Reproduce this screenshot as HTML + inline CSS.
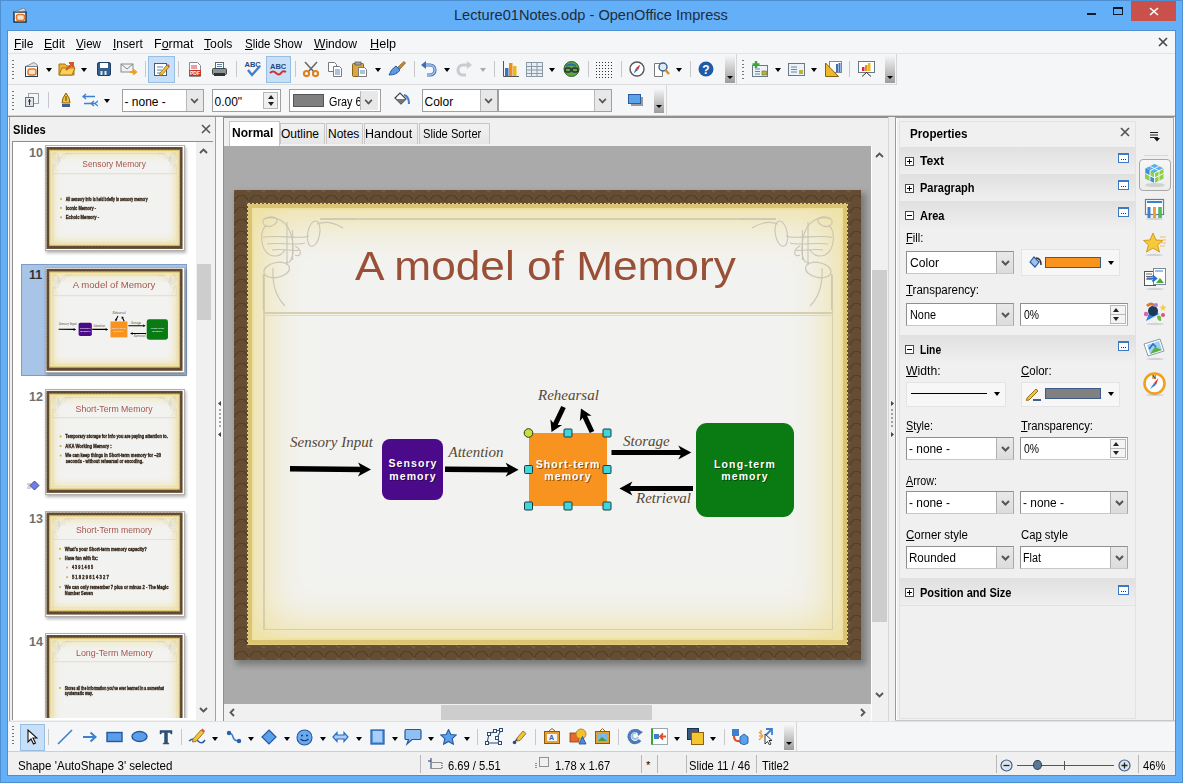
<!DOCTYPE html>
<html><head><meta charset="utf-8">
<style>
*{box-sizing:border-box;margin:0;padding:0}
html,body{width:1183px;height:783px;overflow:hidden;background:#64b0f8;font-family:"Liberation Sans",sans-serif;font-size:12px;color:#000;position:relative}
.a{position:absolute}
.t{position:absolute;white-space:nowrap;line-height:1}
.m{transform:scaleX(.93);transform-origin:0 0}
.u{text-decoration:underline;text-underline-offset:1px}
.sep{position:absolute;width:1px;background:#c8c8c8}
.dd{position:absolute;width:0;height:0;border-left:3.5px solid transparent;border-right:3.5px solid transparent;border-top:4px solid #000}
.grip{position:absolute;width:2px;background:repeating-linear-gradient(to bottom,#777 0 1px,transparent 1px 3.5px)}
.combo{position:absolute;background:#fff;border:1px solid #a0a0a0;height:23px}
.combo .btn{position:absolute;right:0;top:0;bottom:0;width:17px;background:#e8e8e8;border-left:1px solid #b8b8b8}
.chev{position:absolute;left:4px;top:6px;width:7px;height:7px;border-right:2px solid #555;border-bottom:2px solid #555;transform:rotate(45deg) scale(.8)}
.ct{position:absolute;left:1.5px;top:5px;font-size:12px;white-space:nowrap}
.hbtn{position:absolute;background:#c7dff7;border:1px solid #96bde4}
.ph{position:absolute;left:899px;width:236px;height:27px;background:linear-gradient(#e4e4e4,#eeeeee)}
.ph .tt{position:absolute;left:20px;top:8px;font-weight:bold;font-size:12.5px}
.pbox{position:absolute;left:6px;top:10px;width:9px;height:9px;border:1px solid #555;background:#fff}
.pbox:before{content:"";position:absolute;left:1px;top:3px;width:5px;height:1px;background:#000}
.pbox.plus:after{content:"";position:absolute;left:3px;top:1px;width:1px;height:5px;background:#000}
.more{position:absolute;left:219px;top:5px;width:11px;height:10px;border:1px solid #4a7ec0;background:#fff}
.more:before{content:"";position:absolute;left:0;top:0;right:0;height:2px;background:#4a7ec0}
.more:after{content:"...";position:absolute;left:1px;top:-3px;font-size:8px;color:#333}
.lbl{position:absolute;font-size:12px;white-space:nowrap;line-height:1}
</style></head><body>
<!-- title bar -->
<div class="a" style="left:0;top:0;width:1183px;height:1px;background:#4d8fd0"></div><div class="a" style="left:0;top:0;width:1px;height:783px;background:#4d8fd0"></div><div class="a" style="left:1182px;top:0;width:1px;height:783px;background:#4d8fd0"></div><div class="a" style="left:0;top:782px;width:1183px;height:1px;background:#4d8fd0"></div>
<svg class="a" style="left:13px;top:7px" width="15" height="16" viewBox="0 0 15 16"><rect x="1" y="5" width="12" height="10" fill="#fff" stroke="#1e3550" stroke-width="1.5"/><rect x="3.5" y="7.5" width="8" height="6" rx="2" fill="#f3e1c8" stroke="#e07a2c" stroke-width="1.6"/><path d="M1 5 L11 1 L13 4 Z" fill="#d8dde4" stroke="#6b7a8a" stroke-width=".8"/></svg>
<div class="t" style="left:454px;top:8px;font-size:14.6px;color:#1f2b38">Lecture01Notes.odp - OpenOffice Impress</div>
<div class="a" style="left:1087px;top:13px;width:9px;height:2px;background:#0d1b2a"></div>
<div class="a" style="left:1113px;top:7px;width:10px;height:8px;border:1px solid #0d1b2a;border-top-width:2px"></div>
<div class="a" style="left:1131px;top:1px;width:45px;height:20px;background:#c9504b"></div>
<svg class="a" style="left:1149px;top:7px" width="10" height="9"><path d="M1 1 L9 8 M9 1 L1 8" stroke="#fff" stroke-width="1.6"/></svg>

<!-- window content -->
<div class="a" style="left:7px;top:30px;width:1169px;height:746px;background:#4f8fd0"></div>
<div class="a" style="left:8px;top:31px;width:1167px;height:744px;background:#f0f0f0"></div>
<!-- menu -->
<div class="a" style="left:8px;top:31px;width:1167px;height:23px;background:#f5f6f7;border-bottom:1px solid #e2e3e4"></div>
<div class="t" style="left:14.1px;top:37.5px;font-size:12px;transform:scaleX(1.011);transform-origin:0 0"><span class="u">F</span>ile</div>
<div class="t" style="left:44.0px;top:37.5px;font-size:12px;transform:scaleX(1.013);transform-origin:0 0"><span class="u">E</span>dit</div>
<div class="t" style="left:75.7px;top:37.5px;font-size:12px;transform:scaleX(0.969);transform-origin:0 0"><span class="u">V</span>iew</div>
<div class="t" style="left:112.7px;top:37.5px;font-size:12px;transform:scaleX(0.989);transform-origin:0 0"><span class="u">I</span>nsert</div>
<div class="t" style="left:153.7px;top:37.5px;font-size:12px;transform:scaleX(1.039);transform-origin:0 0">F<span class="u">o</span>rmat</div>
<div class="t" style="left:203.9px;top:37.5px;font-size:12px;transform:scaleX(1.016);transform-origin:0 0"><span class="u">T</span>ools</div>
<div class="t" style="left:244.9px;top:37.5px;font-size:12px;transform:scaleX(0.952);transform-origin:0 0"><span class="u">S</span>lide Show</div>
<div class="t" style="left:313.7px;top:37.5px;font-size:12px;transform:scaleX(1.009);transform-origin:0 0"><span class="u">W</span>indow</div>
<div class="t" style="left:370.1px;top:37.5px;font-size:12px;transform:scaleX(1.054);transform-origin:0 0"><span class="u">H</span>elp</div>
<svg class="a" style="left:1158px;top:37px" width="10" height="10"><path d="M1 1 L9 9 M9 1 L1 9" stroke="#444" stroke-width="1.6"/></svg>

<!-- toolbar area bg -->
<div class="a" style="left:8px;top:54px;width:1167px;height:63px;background:#f5f6f7"></div>
<div class="a" style="left:8px;top:84px;width:889px;height:1px;background:#dcdcdc"></div>
<div class="a" style="left:8px;top:115px;width:1167px;height:1px;background:#d0d0d0"></div><div class="a" style="left:8px;top:116px;width:1167px;height:1px;background:#909090"></div>
<div class="a" style="left:736px;top:54px;width:1px;height:31px;background:#d6d6d6"></div>
<div class="a" style="left:896px;top:54px;width:1px;height:31px;background:#d6d6d6"></div>
<div class="a" style="left:666px;top:85px;width:1px;height:31px;background:#d6d6d6"></div>
<div class="grip" style="left:12px;top:60px;height:19px"></div>
<!-- new -->
<svg class="a" style="left:24px;top:61px" width="16" height="16"><rect x="1.5" y="5.5" width="12" height="10" fill="#fff" stroke="#243a55"/><rect x="4" y="8" width="8" height="6" rx="2" fill="#f6e3cc" stroke="#e0782a" stroke-width="1.5"/><path d="M1.5 5.5 L10 1.5 L13.5 4 L13.5 5.5Z" fill="#dde2e8" stroke="#70808f" stroke-width=".8"/></svg>
<div class="dd" style="left:46px;top:68px"></div>
<!-- open -->
<svg class="a" style="left:58px;top:61px" width="18" height="16"><path d="M1 3h6l2 2h7v9H1z" fill="#e9b430" stroke="#a97512"/><path d="M1 14 L4 7 H17 L14 14Z" fill="#f6d25a" stroke="#a97512"/><path d="M8 9 L14 3 M11 2 H15 V6" stroke="#d9541e" stroke-width="2" fill="none"/></svg>
<div class="dd" style="left:81px;top:68px"></div>
<!-- save -->
<svg class="a" style="left:96px;top:61px" width="16" height="16"><rect x="1.5" y="1.5" width="13" height="13" rx="1.5" fill="#335f8f" stroke="#1f3f66"/><rect x="4" y="2" width="8" height="5" fill="#fff"/><rect x="4.5" y="10" width="2" height="4" fill="#dfe7ef"/><rect x="8.5" y="10" width="2" height="4" fill="#dfe7ef"/></svg>
<!-- mail -->
<svg class="a" style="left:120px;top:62px" width="18" height="14"><rect x="1" y="2" width="12" height="8" fill="#f2f2f2" stroke="#8a8a8a"/><path d="M1 2 L7 7 L13 2" fill="none" stroke="#8a8a8a"/><path d="M10 10 H15 M13 7.5 L16 10 L13 12.5" stroke="#f0a020" stroke-width="2" fill="none"/></svg>
<div class="sep" style="left:145px;top:61px;height:16px"></div>
<div class="hbtn" style="left:148px;top:56px;width:27px;height:27px"></div>
<svg class="a" style="left:153px;top:61px" width="17" height="16"><rect x="1.5" y="2.5" width="12" height="12" fill="#fff" stroke="#4d5d6d"/><path d="M4 6h6M4 9h5M4 12h3" stroke="#5b86b5"/><path d="M7 12 L14 4 L16 6 L9 14 L6.5 14.5Z" fill="#f4c03a" stroke="#8d6a12" stroke-width=".8"/><path d="M14 4 L15 3 L17 5 L16 6Z" fill="#e05050"/></svg>
<div class="sep" style="left:178px;top:61px;height:16px"></div>
<!-- pdf -->
<svg class="a" style="left:187px;top:61px" width="16" height="16"><path d="M2.5 1.5h8l3 3v11h-11z" fill="#fff" stroke="#8c8c8c"/><path d="M4 5h6M4 7h6" stroke="#d04040"/><rect x="2" y="9" width="12" height="6" fill="#c8342c"/><text x="3" y="14.2" font-size="5" font-weight="bold" fill="#fff" font-family="Liberation Sans">PDF</text></svg>
<!-- print -->
<svg class="a" style="left:211px;top:61px" width="17" height="16"><rect x="4.5" y="1.5" width="8" height="6" fill="#fff" stroke="#666"/><path d="M6 3.5h5M6 5.5h5" stroke="#5b86b5"/><rect x="1.5" y="7.5" width="14" height="6" rx="1" fill="#8d9496" stroke="#3f4445"/><rect x="3" y="12" width="11" height="3" fill="#2f3335"/></svg>
<div class="sep" style="left:236px;top:61px;height:16px"></div>
<!-- spell -->
<svg class="a" style="left:244px;top:60px" width="18" height="17"><text x="0.5" y="7" font-size="7.5" font-weight="bold" fill="#224a86" font-family="Liberation Sans">ABC</text><path d="M4 10 L8 15 L16 6" stroke="#3f7fd0" stroke-width="2.4" fill="none"/></svg>
<div class="hbtn" style="left:266px;top:56px;width:25px;height:27px"></div>
<svg class="a" style="left:269px;top:61px" width="18" height="16"><text x="1" y="8" font-size="7.5" font-weight="bold" fill="#224a86" font-family="Liberation Sans">ABC</text><path d="M1 12 Q4 9 7 12 T12 12 T17 11" stroke="#d03030" stroke-width="2" fill="none"/></svg>
<div class="sep" style="left:295px;top:61px;height:16px"></div>
<!-- cut -->
<svg class="a" style="left:302px;top:61px" width="18" height="16"><path d="M3 1 L12 11 M15 1 L6 11" stroke="#6a6a6a" stroke-width="1.6"/><circle cx="4.5" cy="12.5" r="2.6" fill="none" stroke="#e0801c" stroke-width="2"/><circle cx="13.5" cy="12.5" r="2.6" fill="none" stroke="#e0801c" stroke-width="2"/></svg>
<!-- copy -->
<svg class="a" style="left:327px;top:61px" width="16" height="16"><path d="M1.5 1.5h6l2 2v7h-8z" fill="#fff" stroke="#7a7a7a"/><path d="M6.5 5.5h6l2 2v8h-8z" fill="#fff" stroke="#7a7a7a"/><path d="M8 9h5M8 11h5M8 13h5" stroke="#5b86b5"/></svg>
<!-- paste -->
<svg class="a" style="left:351px;top:61px" width="18" height="16"><rect x="1.5" y="2.5" width="11" height="13" rx="1" fill="#d9a640" stroke="#8a6518"/><rect x="4" y="1" width="6" height="3" fill="#9aa4ad" stroke="#555" stroke-width=".7"/><path d="M7.5 6.5h6l2 2v7h-8z" fill="#fff" stroke="#7a7a7a"/><path d="M9 10h5M9 12h5" stroke="#5b86b5"/></svg>
<div class="dd" style="left:375px;top:68px"></div>
<!-- brush -->
<svg class="a" style="left:388px;top:61px" width="18" height="16"><path d="M10 6 L16 0.5 L17.5 2 L12 8Z" fill="#c58b2e" stroke="#7a5518" stroke-width=".7"/><path d="M1 14 Q3 8 8 5 L12 9 Q9 14 1 14Z" fill="#5b9ae0" stroke="#2a5d9f"/></svg>
<div class="sep" style="left:414px;top:61px;height:16px"></div>
<!-- undo -->
<svg class="a" style="left:420px;top:61px" width="17" height="16"><path d="M4 4 H10 A5 5 0 0 1 10 14 H7" fill="none" stroke="#3c6eb4" stroke-width="3.2"/><path d="M4 4 H10 A5 5 0 0 1 10 14 H7" fill="none" stroke="#a9c8ee" stroke-width="1.4"/><path d="M1 4 L6 0 V8Z" fill="#3c6eb4"/></svg>
<div class="dd" style="left:444px;top:68px"></div>
<svg class="a" style="left:456px;top:61px" width="17" height="16"><path d="M13 4 H7 A5 5 0 0 0 7 14 H10" fill="none" stroke="#c9cdd2" stroke-width="3.2"/><path d="M16 4 L11 0 V8Z" fill="#c9cdd2"/></svg>
<div class="dd" style="left:480px;top:68px;border-top-color:#aaa"></div>
<div class="sep" style="left:494px;top:61px;height:16px"></div>
<!-- chart -->
<svg class="a" style="left:502px;top:61px" width="17" height="16"><path d="M1.5 0 V15.5 H17" stroke="#555" fill="none"/><rect x="3" y="7" width="3.5" height="8" fill="#3d73c0"/><rect x="7" y="2" width="3.5" height="13" fill="#f08a1a"/><rect x="11" y="5" width="3.5" height="10" fill="#e8b820"/></svg>
<!-- table -->
<svg class="a" style="left:526px;top:62px" width="17" height="15"><rect x="0.5" y="0.5" width="16" height="14" fill="#e8eef5" stroke="#8a97a5"/><path d="M0.5 4.5h16M0.5 8h16M0.5 11.5h16M5.5 .5v14M11 .5v14" stroke="#8a97a5"/></svg>
<div class="dd" style="left:549px;top:68px"></div>
<!-- globe link -->
<svg class="a" style="left:563px;top:61px" width="17" height="16"><circle cx="8.5" cy="8" r="7.5" fill="#5aa84a" stroke="#2f5e2a"/><path d="M3 5 Q8 2 13 5" stroke="#2b6aa0" stroke-width="2" fill="none"/><rect x="2" y="7" width="6" height="4" rx="2" fill="none" stroke="#333" stroke-width="1.5"/><rect x="9" y="7" width="6" height="4" rx="2" fill="none" stroke="#333" stroke-width="1.5"/></svg>
<div class="sep" style="left:588px;top:61px;height:16px"></div>
<svg class="a" style="left:595px;top:61px" width="18" height="17"><g fill="#333"><rect x="1" y="1" width="1" height="1"/><rect x="1" y="4" width="1" height="1"/><rect x="1" y="7" width="1" height="1"/><rect x="1" y="10" width="1" height="1"/><rect x="1" y="13" width="1" height="1"/><rect x="1" y="16" width="1" height="1"/><rect x="4" y="1" width="1" height="1"/><rect x="4" y="4" width="1" height="1"/><rect x="4" y="7" width="1" height="1"/><rect x="4" y="10" width="1" height="1"/><rect x="4" y="13" width="1" height="1"/><rect x="4" y="16" width="1" height="1"/><rect x="7" y="1" width="1" height="1"/><rect x="7" y="4" width="1" height="1"/><rect x="7" y="7" width="1" height="1"/><rect x="7" y="10" width="1" height="1"/><rect x="7" y="13" width="1" height="1"/><rect x="7" y="16" width="1" height="1"/><rect x="10" y="1" width="1" height="1"/><rect x="10" y="4" width="1" height="1"/><rect x="10" y="7" width="1" height="1"/><rect x="10" y="10" width="1" height="1"/><rect x="10" y="13" width="1" height="1"/><rect x="10" y="16" width="1" height="1"/><rect x="13" y="1" width="1" height="1"/><rect x="13" y="4" width="1" height="1"/><rect x="13" y="7" width="1" height="1"/><rect x="13" y="10" width="1" height="1"/><rect x="13" y="13" width="1" height="1"/><rect x="13" y="16" width="1" height="1"/><rect x="16" y="1" width="1" height="1"/><rect x="16" y="4" width="1" height="1"/><rect x="16" y="7" width="1" height="1"/><rect x="16" y="10" width="1" height="1"/><rect x="16" y="13" width="1" height="1"/><rect x="16" y="16" width="1" height="1"/></g></svg>
<div class="sep" style="left:621px;top:61px;height:16px"></div>
<!-- navigator -->
<svg class="a" style="left:629px;top:61px" width="16" height="16"><circle cx="8" cy="8" r="7" fill="#fff" stroke="#555" stroke-width="1.4"/><path d="M11.5 3.5 L7 7 L9 9Z" fill="#d02828"/><path d="M4.5 12.5 L7 7 L9 9Z" fill="#3f6fb5"/></svg>
<!-- zoom -->
<svg class="a" style="left:653px;top:61px" width="17" height="16"><path d="M1.5 2.5h6l2 2v11h-8z" fill="#fff" stroke="#7a7a7a"/><circle cx="10" cy="6" r="4" fill="#dfeaf7" stroke="#3c5f8e" stroke-width="1.4"/><path d="M12.5 9 L16 13" stroke="#c8941c" stroke-width="2.4"/></svg>
<div class="dd" style="left:676px;top:68px"></div>
<div class="sep" style="left:690px;top:61px;height:16px"></div>
<!-- help -->
<svg class="a" style="left:698px;top:61px" width="16" height="16"><circle cx="8" cy="8" r="7.5" fill="#1f5aa8"/><text x="4.2" y="12.5" font-size="12" font-weight="bold" fill="#fff" font-family="Liberation Sans">?</text></svg>
<div class="a" style="left:725px;top:56px;width:10px;height:27px;background:linear-gradient(#f4f4f4,#9c9c9c)"></div>
<div class="dd" style="left:727px;top:76px;border-left-width:3px;border-right-width:3px;border-top-width:3px"></div>
<!-- toolbar 2 of row 1 -->
<div class="grip" style="left:742px;top:60px;height:19px"></div>
<svg class="a" style="left:751px;top:61px" width="18" height="16"><rect x="1.5" y="4.5" width="15" height="11" fill="#eef2f7" stroke="#6a7785"/><path d="M4 8h5M4 10.5h5M4 13h5" stroke="#5b86b5"/><rect x="11" y="10" width="4.5" height="4" fill="#b9b53a" stroke="#6a6420" stroke-width=".6"/><path d="M5 0 V7 M1.5 3.5 H8.5" stroke="#3aa635" stroke-width="2.4"/></svg>
<div class="dd" style="left:775px;top:68px"></div>
<svg class="a" style="left:788px;top:62px" width="17" height="15"><rect x="0.5" y="1.5" width="16" height="12" fill="#eef2f7" stroke="#6a7785"/><path d="M3 5h6M3 7.5h6M3 10h6" stroke="#5b86b5"/><rect x="11" y="8" width="4" height="4" fill="#b9b53a"/></svg>
<div class="dd" style="left:811px;top:68px"></div>
<svg class="a" style="left:825px;top:61px" width="17" height="16"><rect x="4.5" y="0.5" width="12" height="11" fill="#fff" stroke="#7a8a9a"/><rect x="11" y="3" width="2" height="8" fill="#3f6fb5"/><rect x="13.5" y="2" width="2" height="9" fill="#3f6fb5"/><path d="M0.5 15.5 V2 L13.5 15.5Z" fill="#f2b62a" stroke="#8a6212"/></svg>
<div class="sep" style="left:849px;top:61px;height:16px"></div>
<svg class="a" style="left:858px;top:61px" width="17" height="16"><rect x="0.5" y="0.5" width="16" height="11" fill="#fff" stroke="#6a7785"/><rect x="4" y="6" width="2.5" height="4" fill="#d03030"/><rect x="7" y="4" width="2.5" height="6" fill="#f08a1a"/><rect x="10" y="2" width="2.5" height="8" fill="#e8b820"/><path d="M4 15.5 L8.5 11.5 L13 15.5" stroke="#333" fill="none"/></svg>
<div class="a" style="left:885px;top:56px;width:10px;height:27px;background:linear-gradient(#f4f4f4,#9c9c9c)"></div>
<div class="dd" style="left:887px;top:76px;border-left-width:3px;border-right-width:3px;border-top-width:3px"></div>

<div class="grip" style="left:12px;top:91px;height:19px"></div>
<svg class="a" style="left:24px;top:92px" width="16" height="16"><rect x="4.5" y="1.5" width="10" height="10" fill="#f4f6f8" stroke="#9aa2aa"/><rect x="1.5" y="5.5" width="8" height="9" fill="#e0e3e6" stroke="#6a737b"/><path d="M5.5 7v6M4 9h3" stroke="#333"/></svg>
<div class="sep" style="left:48px;top:92px;height:16px"></div>
<svg class="a" style="left:60px;top:92px" width="12" height="16"><path d="M6 1 Q10 6 10 11 H2 Q2 6 6 1Z" fill="#f2c23a" stroke="#8a6212"/><path d="M6 4 V9" stroke="#5a4008"/><rect x="2" y="12" width="8" height="3" fill="#3c5f8e"/></svg>
<svg class="a" style="left:81px;top:93px" width="17" height="14"><path d="M14 3.5 H3 M5 1 L2 3.5 L5 6" stroke="#3d7fd0" stroke-width="1.3" fill="none"/><path d="M3 10.5 H15 M13 8 L10 10.5 L13 13 M17 8 L14 10.5 L17 13" stroke="#3d7fd0" stroke-width="1.3" fill="none"/></svg>
<div class="dd" style="left:104px;top:99px"></div>
<div class="combo" style="left:122px;top:89px;width:82px"><div class="ct">- none -</div><div class="btn"><div class="chev"></div></div></div>
<div class="combo" style="left:212px;top:89px;width:69px"><div class="ct">0.00"</div><div class="a" style="right:2px;top:2px;width:15px;height:17px;background:#f0f0f0;border:1px solid #b5b5b5"></div><div class="a" style="right:6px;top:5px;border-left:3px solid transparent;border-right:3px solid transparent;border-bottom:4px solid #222"></div><div class="a" style="right:6px;top:12px;border-left:3px solid transparent;border-right:3px solid transparent;border-top:4px solid #222"></div></div>
<div class="combo" style="left:289px;top:89px;width:92px"><div class="a" style="left:3px;top:4px;width:31px;height:13px;background:#808080;border:1px solid #555"></div><div class="ct" style="left:38.5px;transform:scaleX(.9);transform-origin:0 0">Gray 6</div><div class="btn" style="width:18px;right:2px;top:1px;bottom:1px"><div class="chev"></div></div></div>
<svg class="a" style="left:393px;top:92px" width="17" height="16"><path d="M2 6 L7 1 L13 7 L8 12Z" fill="#fff" stroke="#444" stroke-width="1.2"/><path d="M3 7 L8 12 L13 7Z" fill="#777"/><path d="M11 3 Q16 4 16 12" stroke="#3d7fd0" stroke-width="2" fill="none"/></svg>
<div class="combo" style="left:422px;top:89px;width:76px"><div class="ct">Color</div><div class="btn"><div class="chev"></div></div></div>
<div class="combo" style="left:498px;top:89px;width:114px"><div class="btn"><div class="chev"></div></div></div>
<svg class="a" style="left:627px;top:92px" width="17" height="16"><rect x="4" y="5" width="12" height="9" fill="#9a9a9a"/><rect x="1.5" y="2.5" width="12" height="9" fill="#5aa2ea" stroke="#2a5d9f"/></svg>
<div class="a" style="left:654px;top:89px;width:10px;height:24px;background:linear-gradient(#f4f4f4,#9c9c9c)"></div>
<div class="dd" style="left:656px;top:105px;border-left-width:3px;border-right-width:3px;border-top-width:3px"></div>


<!-- MAIN -->
<!-- slides panel -->
<div class="a" style="left:8px;top:117px;width:208px;height:604px;background:#f0f0f0;border-left:1px solid #fff;border-right:1px solid #fff"></div><div class="a" style="left:9px;top:117px;width:1px;height:604px;background:#a0a0a0"></div><div class="a" style="left:215px;top:117px;width:1px;height:604px;background:#a0a0a0"></div><div class="a" style="left:216px;top:117px;width:7px;height:604px;background:#f8f8f8"></div>
<div class="t" style="left:12.5px;top:123.5px;font-size:12.5px;font-weight:bold;transform:scaleX(.89);transform-origin:0 0">Slides</div>
<svg class="a" style="left:201px;top:124px" width="10" height="10"><path d="M1 1 L9 9 M9 1 L1 9" stroke="#555" stroke-width="1.6"/></svg>
<div class="a" style="left:12px;top:141px;width:201px;height:579px;background:#fff;border-top:1px solid #8f8f8f;border-left:1px solid #8f8f8f"></div>
<div class="a" style="left:196px;top:142px;width:17px;height:578px;background:#f0f0f0"></div>
<div class="a" style="left:197px;top:264px;width:14px;height:56px;background:#cdcdcd"></div>
<svg class="a" style="left:199px;top:148px" width="9" height="6"><path d="M1 5 L4.5 1.5 L8 5" stroke="#555" stroke-width="1.8" fill="none"/></svg>
<svg class="a" style="left:199px;top:707px" width="9" height="6"><path d="M1 1 L4.5 4.5 L8 1" stroke="#555" stroke-width="1.8" fill="none"/></svg>
<div class="t" style="left:29px;top:147px;font-size:12.5px;font-weight:bold;color:#6f6f6f">10</div>
<div class="a" style="left:44.5px;top:145.0px;width:140px;height:106px;background:#fff;border:1px solid #b0b0b0;box-shadow:1px 2px 3px rgba(0,0,0,.3)"></div>
<div class="a" style="left:0;top:0;width:1183px;height:783px;transform-origin:0 0;transform:translate(46.50px,147.00px) scale(0.21691) translate(-234px,-190px)"><div class="a" style="left:234px;top:190px;width:627px;height:470px;background-color:#654d34;background-image:radial-gradient(circle at 50% 100%,transparent 0 6px,rgba(45,32,18,.3) 6px 7.2px,transparent 7.2px),radial-gradient(circle at 50% 50%,#725a3e 0 2px,transparent 2.5px);background-size:15px 12px,15px 12px;background-position:0 0,7px 6px"></div>
<div class="a" style="left:247px;top:203px;width:601px;height:442px;background:radial-gradient(circle at 50% 50%,#e2cf82 0 1.6px,transparent 1.9px);background-size:4px 4px"></div>
<div class="a" style="left:248px;top:204px;width:599px;height:440px;background:#dbc575"></div>
<div class="a" style="left:252px;top:208px;width:591px;height:432px;background:#efe2a0"></div>
<div class="a" style="left:254px;top:210px;width:587px;height:428px;background:#f2f2f0;box-shadow:inset 0 0 40px 10px #efe09e"></div>
<div class="a" style="left:320px;top:218px;width:456px;height:1.5px;background:#d6cfae"></div>
<div class="a" style="left:263px;top:275px;width:1.5px;height:355px;background:#d6cfae"></div>
<div class="a" style="left:831.5px;top:275px;width:1.5px;height:355px;background:#d6cfae"></div>
<div class="a" style="left:263px;top:628.5px;width:570px;height:1.5px;background:#d6cfae"></div>
<div class="a" style="left:263px;top:312px;width:570px;height:1.5px;background:#d6cfae"></div>
<div class="a" style="left:263px;top:314.5px;width:570px;height:1.5px;background:#dfd9bd"></div>
<svg class="a" style="left:255px;top:210px" width="100" height="100" viewBox="0 0 100 100"><g fill="none" stroke="#c9c5b3" stroke-width="1.1"><path d="M9 9 C5 14 12 20 20 14 C26 9 18 4 9 9"/><path d="M9 9 C20 5 33 10 37 28 C40 45 36 55 31 52"/><path d="M12 15 C4 20 5 40 15 45 C22 48 28 44 30 40"/><path d="M8 27.5 C20 24 45 30 54 26"/><path d="M12 34 C25 32 40 36 50 33"/><path d="M17 40 C28 38 38 42 45 40"/><path d="M32 12 V55"/><path d="M37.6 20 V50"/><path d="M40 36 C48 40 46 48 40 45"/><ellipse cx="58.7" cy="23.6" rx="6" ry="12.8" transform="rotate(10 58.7 23.6)"/><path d="M62 14 C70 11 80 13 88 18"/><path d="M65 9 H100"/><ellipse cx="21.7" cy="60" rx="13" ry="7.5" transform="rotate(-12 21.7 60)"/><path d="M18 58 C17 75 21 87 30 96"/><path d="M8.3 64 V100"/></g></svg>
<svg class="a" style="left:740px;top:210px;transform:scaleX(-1)" width="100" height="100" viewBox="0 0 100 100"><g fill="none" stroke="#c9c5b3" stroke-width="1.1"><path d="M9 9 C5 14 12 20 20 14 C26 9 18 4 9 9"/><path d="M9 9 C20 5 33 10 37 28 C40 45 36 55 31 52"/><path d="M12 15 C4 20 5 40 15 45 C22 48 28 44 30 40"/><path d="M8 27.5 C20 24 45 30 54 26"/><path d="M12 34 C25 32 40 36 50 33"/><path d="M17 40 C28 38 38 42 45 40"/><path d="M32 12 V55"/><path d="M37.6 20 V50"/><path d="M40 36 C48 40 46 48 40 45"/><ellipse cx="58.7" cy="23.6" rx="6" ry="12.8" transform="rotate(10 58.7 23.6)"/><path d="M62 14 C70 11 80 13 88 18"/><path d="M65 9 H100"/><ellipse cx="21.7" cy="60" rx="13" ry="7.5" transform="rotate(-12 21.7 60)"/><path d="M18 58 C17 75 21 87 30 96"/><path d="M8.3 64 V100"/></g></svg><div class="t" style="left:399.0px;top:248.3px;font-size:40px;color:#a5544c;transform:scaleX(0.969);transform-origin:0 0">Sensory Memory</div><div class="a" style="left:296.5px;top:425.7px;width:8px;height:8px;background:#c9a84a"></div><div class="t" style="left:322.5px;top:417.9px;font-size:24px;font-weight:bold;color:#34261a;-webkit-text-stroke:1.6px #34261a;transform:scaleX(0.664);transform-origin:0 0">All sensory info is held briefly in sensory memory</div><div class="a" style="left:296.5px;top:467.2px;width:8px;height:8px;background:#c9a84a"></div><div class="t" style="left:322.5px;top:459.4px;font-size:24px;font-weight:bold;color:#34261a;-webkit-text-stroke:1.6px #34261a;transform:scaleX(0.765);transform-origin:0 0">Iconic Memory -</div><div class="a" style="left:296.5px;top:510.1px;width:8px;height:8px;background:#c9a84a"></div><div class="t" style="left:322.5px;top:502.3px;font-size:24px;font-weight:bold;color:#34261a;-webkit-text-stroke:1.6px #34261a;transform:scaleX(0.799);transform-origin:0 0">Echoic Memory -</div></div>
<div class="a" style="left:21px;top:264px;width:166px;height:112px;background:#a8c5e8;border:1px solid #7e9dc6"></div>
<div class="t" style="left:29px;top:269px;font-size:12.5px;font-weight:bold;color:#333">11</div>
<div class="a" style="left:44.5px;top:266.8px;width:140px;height:106px;background:#fff;border:1px solid #b0b0b0;box-shadow:1px 2px 3px rgba(0,0,0,.3)"></div>
<div class="a" style="left:0;top:0;width:1183px;height:783px;transform-origin:0 0;transform:translate(46.50px,268.80px) scale(0.21691) translate(-234px,-190px)"><div class="a" style="left:234px;top:190px;width:627px;height:470px;background-color:#654d34;background-image:radial-gradient(circle at 50% 100%,transparent 0 6px,rgba(45,32,18,.3) 6px 7.2px,transparent 7.2px),radial-gradient(circle at 50% 50%,#725a3e 0 2px,transparent 2.5px);background-size:15px 12px,15px 12px;background-position:0 0,7px 6px"></div>
<div class="a" style="left:247px;top:203px;width:601px;height:442px;background:radial-gradient(circle at 50% 50%,#e2cf82 0 1.6px,transparent 1.9px);background-size:4px 4px"></div>
<div class="a" style="left:248px;top:204px;width:599px;height:440px;background:#dbc575"></div>
<div class="a" style="left:252px;top:208px;width:591px;height:432px;background:#efe2a0"></div>
<div class="a" style="left:254px;top:210px;width:587px;height:428px;background:#f2f2f0;box-shadow:inset 0 0 40px 10px #efe09e"></div>
<div class="a" style="left:320px;top:218px;width:456px;height:1.5px;background:#d6cfae"></div>
<div class="a" style="left:263px;top:275px;width:1.5px;height:355px;background:#d6cfae"></div>
<div class="a" style="left:831.5px;top:275px;width:1.5px;height:355px;background:#d6cfae"></div>
<div class="a" style="left:263px;top:628.5px;width:570px;height:1.5px;background:#d6cfae"></div>
<div class="a" style="left:263px;top:312px;width:570px;height:1.5px;background:#d6cfae"></div>
<div class="a" style="left:263px;top:314.5px;width:570px;height:1.5px;background:#dfd9bd"></div>
<svg class="a" style="left:255px;top:210px" width="100" height="100" viewBox="0 0 100 100"><g fill="none" stroke="#c9c5b3" stroke-width="1.1"><path d="M9 9 C5 14 12 20 20 14 C26 9 18 4 9 9"/><path d="M9 9 C20 5 33 10 37 28 C40 45 36 55 31 52"/><path d="M12 15 C4 20 5 40 15 45 C22 48 28 44 30 40"/><path d="M8 27.5 C20 24 45 30 54 26"/><path d="M12 34 C25 32 40 36 50 33"/><path d="M17 40 C28 38 38 42 45 40"/><path d="M32 12 V55"/><path d="M37.6 20 V50"/><path d="M40 36 C48 40 46 48 40 45"/><ellipse cx="58.7" cy="23.6" rx="6" ry="12.8" transform="rotate(10 58.7 23.6)"/><path d="M62 14 C70 11 80 13 88 18"/><path d="M65 9 H100"/><ellipse cx="21.7" cy="60" rx="13" ry="7.5" transform="rotate(-12 21.7 60)"/><path d="M18 58 C17 75 21 87 30 96"/><path d="M8.3 64 V100"/></g></svg>
<svg class="a" style="left:740px;top:210px;transform:scaleX(-1)" width="100" height="100" viewBox="0 0 100 100"><g fill="none" stroke="#c9c5b3" stroke-width="1.1"><path d="M9 9 C5 14 12 20 20 14 C26 9 18 4 9 9"/><path d="M9 9 C20 5 33 10 37 28 C40 45 36 55 31 52"/><path d="M12 15 C4 20 5 40 15 45 C22 48 28 44 30 40"/><path d="M8 27.5 C20 24 45 30 54 26"/><path d="M12 34 C25 32 40 36 50 33"/><path d="M17 40 C28 38 38 42 45 40"/><path d="M32 12 V55"/><path d="M37.6 20 V50"/><path d="M40 36 C48 40 46 48 40 45"/><ellipse cx="58.7" cy="23.6" rx="6" ry="12.8" transform="rotate(10 58.7 23.6)"/><path d="M62 14 C70 11 80 13 88 18"/><path d="M65 9 H100"/><ellipse cx="21.7" cy="60" rx="13" ry="7.5" transform="rotate(-12 21.7 60)"/><path d="M18 58 C17 75 21 87 30 96"/><path d="M8.3 64 V100"/></g></svg><div class="t" style="left:355px;top:246.4px;font-size:40px;color:#a5544c;transform:scaleX(1.105);transform-origin:0 0">A model of Memory</div>
<div class="t" style="left:290.0px;top:434.8px;font-family:'Liberation Serif',serif;font-style:italic;font-size:15px;color:#554836">Sensory Input</div>
<div class="t" style="left:448.5px;top:445.1px;font-family:'Liberation Serif',serif;font-style:italic;font-size:15px;color:#554836">Attention</div>
<div class="t" style="left:538.0px;top:388.0px;font-family:'Liberation Serif',serif;font-style:italic;font-size:15px;color:#554836">Rehearsal</div>
<div class="t" style="left:623.0px;top:434.3px;font-family:'Liberation Serif',serif;font-style:italic;font-size:15px;color:#554836">Storage</div>
<div class="t" style="left:636.0px;top:491.2px;font-family:'Liberation Serif',serif;font-style:italic;font-size:15px;color:#554836">Retrieval</div>
<div class="a" style="left:382px;top:439px;width:61px;height:61px;border-radius:8px;background:#4b0a8a"></div>
<div class="a" style="left:529px;top:433px;width:78px;height:73px;background:#f7931e"></div>
<div class="a" style="left:696px;top:423px;width:98px;height:94px;border-radius:11px;background:#0a7a12"></div>
<div class="t" style="left:353px;width:120px;text-align:center;top:458.0px;font-size:10.5px;font-weight:bold;color:#fff;letter-spacing:1.1px;text-shadow:1px 1px 0 rgba(0,0,0,.45)">Sensory</div><div class="t" style="left:353px;width:120px;text-align:center;top:471.1px;font-size:10.5px;font-weight:bold;color:#fff;letter-spacing:1.1px;text-shadow:1px 1px 0 rgba(0,0,0,.45)">memory</div>
<div class="t" style="left:508px;width:120px;text-align:center;top:458.7px;font-size:10.5px;font-weight:bold;color:#fff;letter-spacing:1.1px;text-shadow:1px 1px 0 rgba(0,0,0,.45)">Short-term</div><div class="t" style="left:508px;width:120px;text-align:center;top:471.1px;font-size:10.5px;font-weight:bold;color:#fff;letter-spacing:1.1px;text-shadow:1px 1px 0 rgba(0,0,0,.45)">memory</div>
<div class="t" style="left:685px;width:120px;text-align:center;top:458.6px;font-size:10.5px;font-weight:bold;color:#fff;letter-spacing:1.1px;text-shadow:1px 1px 0 rgba(0,0,0,.45)">Long-term</div><div class="t" style="left:685px;width:120px;text-align:center;top:471.1px;font-size:10.5px;font-weight:bold;color:#fff;letter-spacing:1.1px;text-shadow:1px 1px 0 rgba(0,0,0,.45)">memory</div>
<svg class="a" style="left:0;top:0" width="1183" height="783"><path d="M371.0 469.5 L357.9 476.4 L361.6 469.4 L358.1 462.4 Z" fill="#000"/><line x1="290.0" y1="468.7" x2="362.6" y2="469.4" stroke="#000" stroke-width="5.5"/><path d="M518.6 469.8 L505.6 476.7 L509.2 469.7 L505.6 462.7 Z" fill="#000"/><line x1="445.0" y1="469.3" x2="510.2" y2="469.7" stroke="#000" stroke-width="5.5"/><path d="M691.3 452.6 L678.3 459.6 L681.9 452.6 L678.3 445.6 Z" fill="#000"/><line x1="611.5" y1="452.5" x2="682.9" y2="452.6" stroke="#000" stroke-width="5"/><path d="M619.4 488.6 L632.4 481.6 L628.8 488.6 L632.4 495.6 Z" fill="#000"/><line x1="693.0" y1="488.6" x2="627.8" y2="488.6" stroke="#000" stroke-width="5"/><path d="M551.5 432.0 L550.4 419.3 L554.9 424.9 L562.1 424.9 Z" fill="#000"/><line x1="563.5" y1="407.0" x2="554.5" y2="425.8" stroke="#000" stroke-width="5"/><path d="M581.0 408.5 L591.6 415.7 L584.4 415.7 L579.8 421.2 Z" fill="#000"/><line x1="592.0" y1="432.0" x2="583.9" y2="414.8" stroke="#000" stroke-width="5"/></svg></div>
<div class="t" style="left:29px;top:391px;font-size:12.5px;font-weight:bold;color:#6f6f6f">12</div>
<div class="a" style="left:44.5px;top:388.9px;width:140px;height:106px;background:#fff;border:1px solid #b0b0b0;box-shadow:1px 2px 3px rgba(0,0,0,.3)"></div>
<div class="a" style="left:0;top:0;width:1183px;height:783px;transform-origin:0 0;transform:translate(46.50px,390.90px) scale(0.21691) translate(-234px,-190px)"><div class="a" style="left:234px;top:190px;width:627px;height:470px;background-color:#654d34;background-image:radial-gradient(circle at 50% 100%,transparent 0 6px,rgba(45,32,18,.3) 6px 7.2px,transparent 7.2px),radial-gradient(circle at 50% 50%,#725a3e 0 2px,transparent 2.5px);background-size:15px 12px,15px 12px;background-position:0 0,7px 6px"></div>
<div class="a" style="left:247px;top:203px;width:601px;height:442px;background:radial-gradient(circle at 50% 50%,#e2cf82 0 1.6px,transparent 1.9px);background-size:4px 4px"></div>
<div class="a" style="left:248px;top:204px;width:599px;height:440px;background:#dbc575"></div>
<div class="a" style="left:252px;top:208px;width:591px;height:432px;background:#efe2a0"></div>
<div class="a" style="left:254px;top:210px;width:587px;height:428px;background:#f2f2f0;box-shadow:inset 0 0 40px 10px #efe09e"></div>
<div class="a" style="left:320px;top:218px;width:456px;height:1.5px;background:#d6cfae"></div>
<div class="a" style="left:263px;top:275px;width:1.5px;height:355px;background:#d6cfae"></div>
<div class="a" style="left:831.5px;top:275px;width:1.5px;height:355px;background:#d6cfae"></div>
<div class="a" style="left:263px;top:628.5px;width:570px;height:1.5px;background:#d6cfae"></div>
<div class="a" style="left:263px;top:312px;width:570px;height:1.5px;background:#d6cfae"></div>
<div class="a" style="left:263px;top:314.5px;width:570px;height:1.5px;background:#dfd9bd"></div>
<svg class="a" style="left:255px;top:210px" width="100" height="100" viewBox="0 0 100 100"><g fill="none" stroke="#c9c5b3" stroke-width="1.1"><path d="M9 9 C5 14 12 20 20 14 C26 9 18 4 9 9"/><path d="M9 9 C20 5 33 10 37 28 C40 45 36 55 31 52"/><path d="M12 15 C4 20 5 40 15 45 C22 48 28 44 30 40"/><path d="M8 27.5 C20 24 45 30 54 26"/><path d="M12 34 C25 32 40 36 50 33"/><path d="M17 40 C28 38 38 42 45 40"/><path d="M32 12 V55"/><path d="M37.6 20 V50"/><path d="M40 36 C48 40 46 48 40 45"/><ellipse cx="58.7" cy="23.6" rx="6" ry="12.8" transform="rotate(10 58.7 23.6)"/><path d="M62 14 C70 11 80 13 88 18"/><path d="M65 9 H100"/><ellipse cx="21.7" cy="60" rx="13" ry="7.5" transform="rotate(-12 21.7 60)"/><path d="M18 58 C17 75 21 87 30 96"/><path d="M8.3 64 V100"/></g></svg>
<svg class="a" style="left:740px;top:210px;transform:scaleX(-1)" width="100" height="100" viewBox="0 0 100 100"><g fill="none" stroke="#c9c5b3" stroke-width="1.1"><path d="M9 9 C5 14 12 20 20 14 C26 9 18 4 9 9"/><path d="M9 9 C20 5 33 10 37 28 C40 45 36 55 31 52"/><path d="M12 15 C4 20 5 40 15 45 C22 48 28 44 30 40"/><path d="M8 27.5 C20 24 45 30 54 26"/><path d="M12 34 C25 32 40 36 50 33"/><path d="M17 40 C28 38 38 42 45 40"/><path d="M32 12 V55"/><path d="M37.6 20 V50"/><path d="M40 36 C48 40 46 48 40 45"/><ellipse cx="58.7" cy="23.6" rx="6" ry="12.8" transform="rotate(10 58.7 23.6)"/><path d="M62 14 C70 11 80 13 88 18"/><path d="M65 9 H100"/><ellipse cx="21.7" cy="60" rx="13" ry="7.5" transform="rotate(-12 21.7 60)"/><path d="M18 58 C17 75 21 87 30 96"/><path d="M8.3 64 V100"/></g></svg><div class="t" style="left:367.7px;top:250.6px;font-size:40px;color:#a5544c;transform:scaleX(1.005);transform-origin:0 0">Short-Term Memory</div><div class="a" style="left:295.0px;top:395.8px;width:8px;height:8px;background:#c9a84a"></div><div class="t" style="left:321.0px;top:388.0px;font-size:24px;font-weight:bold;color:#34261a;-webkit-text-stroke:1.6px #34261a;transform:scaleX(0.755);transform-origin:0 0">Temporary storage for info you are paying attention to.</div><div class="a" style="left:295.0px;top:440.0px;width:8px;height:8px;background:#c9a84a"></div><div class="t" style="left:321.0px;top:432.2px;font-size:24px;font-weight:bold;color:#34261a;-webkit-text-stroke:1.6px #34261a;transform:scaleX(0.801);transform-origin:0 0">AKA Working Memory :</div><div class="a" style="left:295.0px;top:483.8px;width:8px;height:8px;background:#c9a84a"></div><div class="t" style="left:321.0px;top:476.0px;font-size:24px;font-weight:bold;color:#34261a;-webkit-text-stroke:1.6px #34261a;transform:scaleX(0.778);transform-origin:0 0">We can keep things in Short-term memory for ~20</div><div class="t" style="left:323.0px;top:503.2px;font-size:24px;font-weight:bold;color:#34261a;-webkit-text-stroke:1.6px #34261a;transform:scaleX(0.763);transform-origin:0 0">seconds - without rehearsal or encoding.</div></div>
<svg class="a" style="left:26px;top:480px" width="14" height="11"><path d="M1 4h4M2 6h3M1 8h4" stroke="#8a8a9a" stroke-width=".8"/><path d="M8.5 1 L13 5.5 L8.5 10 L4 5.5Z" fill="#6f7fe8" stroke="#2a2f7a" stroke-width=".8"/></svg>
<div class="t" style="left:29px;top:513px;font-size:12.5px;font-weight:bold;color:#6f6f6f">13</div>
<div class="a" style="left:44.5px;top:510.6px;width:140px;height:106px;background:#fff;border:1px solid #b0b0b0;box-shadow:1px 2px 3px rgba(0,0,0,.3)"></div>
<div class="a" style="left:0;top:0;width:1183px;height:783px;transform-origin:0 0;transform:translate(46.50px,512.60px) scale(0.21691) translate(-234px,-190px)"><div class="a" style="left:234px;top:190px;width:627px;height:470px;background-color:#654d34;background-image:radial-gradient(circle at 50% 100%,transparent 0 6px,rgba(45,32,18,.3) 6px 7.2px,transparent 7.2px),radial-gradient(circle at 50% 50%,#725a3e 0 2px,transparent 2.5px);background-size:15px 12px,15px 12px;background-position:0 0,7px 6px"></div>
<div class="a" style="left:247px;top:203px;width:601px;height:442px;background:radial-gradient(circle at 50% 50%,#e2cf82 0 1.6px,transparent 1.9px);background-size:4px 4px"></div>
<div class="a" style="left:248px;top:204px;width:599px;height:440px;background:#dbc575"></div>
<div class="a" style="left:252px;top:208px;width:591px;height:432px;background:#efe2a0"></div>
<div class="a" style="left:254px;top:210px;width:587px;height:428px;background:#f2f2f0;box-shadow:inset 0 0 40px 10px #efe09e"></div>
<div class="a" style="left:320px;top:218px;width:456px;height:1.5px;background:#d6cfae"></div>
<div class="a" style="left:263px;top:275px;width:1.5px;height:355px;background:#d6cfae"></div>
<div class="a" style="left:831.5px;top:275px;width:1.5px;height:355px;background:#d6cfae"></div>
<div class="a" style="left:263px;top:628.5px;width:570px;height:1.5px;background:#d6cfae"></div>
<div class="a" style="left:263px;top:312px;width:570px;height:1.5px;background:#d6cfae"></div>
<div class="a" style="left:263px;top:314.5px;width:570px;height:1.5px;background:#dfd9bd"></div>
<svg class="a" style="left:255px;top:210px" width="100" height="100" viewBox="0 0 100 100"><g fill="none" stroke="#c9c5b3" stroke-width="1.1"><path d="M9 9 C5 14 12 20 20 14 C26 9 18 4 9 9"/><path d="M9 9 C20 5 33 10 37 28 C40 45 36 55 31 52"/><path d="M12 15 C4 20 5 40 15 45 C22 48 28 44 30 40"/><path d="M8 27.5 C20 24 45 30 54 26"/><path d="M12 34 C25 32 40 36 50 33"/><path d="M17 40 C28 38 38 42 45 40"/><path d="M32 12 V55"/><path d="M37.6 20 V50"/><path d="M40 36 C48 40 46 48 40 45"/><ellipse cx="58.7" cy="23.6" rx="6" ry="12.8" transform="rotate(10 58.7 23.6)"/><path d="M62 14 C70 11 80 13 88 18"/><path d="M65 9 H100"/><ellipse cx="21.7" cy="60" rx="13" ry="7.5" transform="rotate(-12 21.7 60)"/><path d="M18 58 C17 75 21 87 30 96"/><path d="M8.3 64 V100"/></g></svg>
<svg class="a" style="left:740px;top:210px;transform:scaleX(-1)" width="100" height="100" viewBox="0 0 100 100"><g fill="none" stroke="#c9c5b3" stroke-width="1.1"><path d="M9 9 C5 14 12 20 20 14 C26 9 18 4 9 9"/><path d="M9 9 C20 5 33 10 37 28 C40 45 36 55 31 52"/><path d="M12 15 C4 20 5 40 15 45 C22 48 28 44 30 40"/><path d="M8 27.5 C20 24 45 30 54 26"/><path d="M12 34 C25 32 40 36 50 33"/><path d="M17 40 C28 38 38 42 45 40"/><path d="M32 12 V55"/><path d="M37.6 20 V50"/><path d="M40 36 C48 40 46 48 40 45"/><ellipse cx="58.7" cy="23.6" rx="6" ry="12.8" transform="rotate(10 58.7 23.6)"/><path d="M62 14 C70 11 80 13 88 18"/><path d="M65 9 H100"/><ellipse cx="21.7" cy="60" rx="13" ry="7.5" transform="rotate(-12 21.7 60)"/><path d="M18 58 C17 75 21 87 30 96"/><path d="M8.3 64 V100"/></g></svg><div class="t" style="left:370.0px;top:250.1px;font-size:40px;color:#a5544c;transform:scaleX(0.993);transform-origin:0 0">Short-Term memory</div><div class="a" style="left:292.4px;top:352.8px;width:8px;height:8px;background:#c9a84a"></div><div class="t" style="left:318.4px;top:345.0px;font-size:24px;font-weight:bold;color:#34261a;-webkit-text-stroke:1.6px #34261a;transform:scaleX(0.782);transform-origin:0 0">What's your Short-term memory capacity?</div><div class="a" style="left:292.4px;top:397.5px;width:8px;height:8px;background:#c9a84a"></div><div class="t" style="left:318.4px;top:389.7px;font-size:24px;font-weight:bold;color:#34261a;-webkit-text-stroke:1.6px #34261a;transform:scaleX(0.775);transform-origin:0 0">Have fun with 5x:</div><div class="a" style="left:325.0px;top:439.0px;width:8px;height:8px;background:#c9a84a"></div><div class="t" style="left:351.0px;top:431.2px;font-size:24px;font-weight:bold;color:#34261a;-webkit-text-stroke:1.6px #34261a;transform:scaleX(0.730);transform-origin:0 0">4 3 9 1 4 6 5</div><div class="a" style="left:325.0px;top:483.8px;width:8px;height:8px;background:#c9a84a"></div><div class="t" style="left:351.0px;top:476.0px;font-size:24px;font-weight:bold;color:#34261a;-webkit-text-stroke:1.6px #34261a;transform:scaleX(0.795);transform-origin:0 0">5 1 8 2 9 6 1 4 3 2 7</div><div class="a" style="left:292.4px;top:528.9px;width:8px;height:8px;background:#c9a84a"></div><div class="t" style="left:318.4px;top:521.1px;font-size:24px;font-weight:bold;color:#34261a;-webkit-text-stroke:1.6px #34261a;transform:scaleX(0.791);transform-origin:0 0">We can only remember 7 plus or minus 2 - The Magic</div><div class="t" style="left:318.4px;top:550.2px;font-size:24px;font-weight:bold;color:#34261a;-webkit-text-stroke:1.6px #34261a;transform:scaleX(0.774);transform-origin:0 0">Number Seven</div></div>
<div class="t" style="left:29px;top:636px;font-size:12.5px;font-weight:bold;color:#6f6f6f">14</div>
<div class="a" style="left:0;top:600px;width:196px;height:118px;overflow:hidden"><div class="a" style="left:0;top:-600px;width:1183px;height:783px"><div class="a" style="left:44.5px;top:633.0px;width:140px;height:106px;background:#fff;border:1px solid #b0b0b0;box-shadow:1px 2px 3px rgba(0,0,0,.3)"></div><div class="a" style="left:0;top:0;width:1183px;height:783px;transform-origin:0 0;transform:translate(46.50px,635.00px) scale(0.21691) translate(-234px,-190px)"><div class="a" style="left:234px;top:190px;width:627px;height:470px;background-color:#654d34;background-image:radial-gradient(circle at 50% 100%,transparent 0 6px,rgba(45,32,18,.3) 6px 7.2px,transparent 7.2px),radial-gradient(circle at 50% 50%,#725a3e 0 2px,transparent 2.5px);background-size:15px 12px,15px 12px;background-position:0 0,7px 6px"></div>
<div class="a" style="left:247px;top:203px;width:601px;height:442px;background:radial-gradient(circle at 50% 50%,#e2cf82 0 1.6px,transparent 1.9px);background-size:4px 4px"></div>
<div class="a" style="left:248px;top:204px;width:599px;height:440px;background:#dbc575"></div>
<div class="a" style="left:252px;top:208px;width:591px;height:432px;background:#efe2a0"></div>
<div class="a" style="left:254px;top:210px;width:587px;height:428px;background:#f2f2f0;box-shadow:inset 0 0 40px 10px #efe09e"></div>
<div class="a" style="left:320px;top:218px;width:456px;height:1.5px;background:#d6cfae"></div>
<div class="a" style="left:263px;top:275px;width:1.5px;height:355px;background:#d6cfae"></div>
<div class="a" style="left:831.5px;top:275px;width:1.5px;height:355px;background:#d6cfae"></div>
<div class="a" style="left:263px;top:628.5px;width:570px;height:1.5px;background:#d6cfae"></div>
<div class="a" style="left:263px;top:312px;width:570px;height:1.5px;background:#d6cfae"></div>
<div class="a" style="left:263px;top:314.5px;width:570px;height:1.5px;background:#dfd9bd"></div>
<svg class="a" style="left:255px;top:210px" width="100" height="100" viewBox="0 0 100 100"><g fill="none" stroke="#c9c5b3" stroke-width="1.1"><path d="M9 9 C5 14 12 20 20 14 C26 9 18 4 9 9"/><path d="M9 9 C20 5 33 10 37 28 C40 45 36 55 31 52"/><path d="M12 15 C4 20 5 40 15 45 C22 48 28 44 30 40"/><path d="M8 27.5 C20 24 45 30 54 26"/><path d="M12 34 C25 32 40 36 50 33"/><path d="M17 40 C28 38 38 42 45 40"/><path d="M32 12 V55"/><path d="M37.6 20 V50"/><path d="M40 36 C48 40 46 48 40 45"/><ellipse cx="58.7" cy="23.6" rx="6" ry="12.8" transform="rotate(10 58.7 23.6)"/><path d="M62 14 C70 11 80 13 88 18"/><path d="M65 9 H100"/><ellipse cx="21.7" cy="60" rx="13" ry="7.5" transform="rotate(-12 21.7 60)"/><path d="M18 58 C17 75 21 87 30 96"/><path d="M8.3 64 V100"/></g></svg>
<svg class="a" style="left:740px;top:210px;transform:scaleX(-1)" width="100" height="100" viewBox="0 0 100 100"><g fill="none" stroke="#c9c5b3" stroke-width="1.1"><path d="M9 9 C5 14 12 20 20 14 C26 9 18 4 9 9"/><path d="M9 9 C20 5 33 10 37 28 C40 45 36 55 31 52"/><path d="M12 15 C4 20 5 40 15 45 C22 48 28 44 30 40"/><path d="M8 27.5 C20 24 45 30 54 26"/><path d="M12 34 C25 32 40 36 50 33"/><path d="M17 40 C28 38 38 42 45 40"/><path d="M32 12 V55"/><path d="M37.6 20 V50"/><path d="M40 36 C48 40 46 48 40 45"/><ellipse cx="58.7" cy="23.6" rx="6" ry="12.8" transform="rotate(10 58.7 23.6)"/><path d="M62 14 C70 11 80 13 88 18"/><path d="M65 9 H100"/><ellipse cx="21.7" cy="60" rx="13" ry="7.5" transform="rotate(-12 21.7 60)"/><path d="M18 58 C17 75 21 87 30 96"/><path d="M8.3 64 V100"/></g></svg><div class="t" style="left:370.0px;top:250.6px;font-size:40px;color:#a5544c;transform:scaleX(1.021);transform-origin:0 0">Long-Term Memory</div><div class="a" style="left:292.4px;top:429.8px;width:8px;height:8px;background:#c9a84a"></div><div class="t" style="left:318.4px;top:422.0px;font-size:24px;font-weight:bold;color:#34261a;-webkit-text-stroke:1.6px #34261a;transform:scaleX(0.662);transform-origin:0 0">Stores all the information you've ever learned in a somewhat</div><div class="t" style="left:318.4px;top:446.9px;font-size:24px;font-weight:bold;color:#34261a;-webkit-text-stroke:1.6px #34261a;transform:scaleX(0.718);transform-origin:0 0">systematic way.</div></div></div></div>
<!-- splitter -->
<svg class="a" style="left:217px;top:400px" width="5" height="38"><path d="M1 3.5 L4 1 V6Z M1 34.5 L4 32 V37Z" fill="#444"/><path d="M2 10h2M2 14h2M2 18h2M2 22h2M2 26h2" stroke="#555"/></svg>
<!-- workspace -->
<div class="a" style="left:223px;top:117px;width:666px;height:604px;background:#f0f0f0;border-top:1px solid #8f8f8f;border-left:1px solid #8f8f8f;border-right:1px solid #fff"></div>
<div class="a" style="left:229px;top:121px;width:51px;height:25px;background:#fff;border:1px solid #c6c6c6;border-bottom:none"></div>
<div class="t" style="left:231.5px;top:127px;font-size:12.5px;font-weight:bold;transform:scaleX(.96);transform-origin:0 0">Normal</div>
<div class="a" style="left:280px;top:123px;width:45px;height:21px;background:linear-gradient(#f2f2f2,#e6e6e6);border:1px solid #c6c6c6;border-bottom:none"></div>
<div class="t" style="left:281px;top:128px;font-size:12px">Outline</div>
<div class="a" style="left:326px;top:123px;width:37px;height:21px;background:linear-gradient(#f2f2f2,#e6e6e6);border:1px solid #c6c6c6;border-bottom:none"></div>
<div class="t" style="left:328px;top:128px;font-size:12px">Notes</div>
<div class="a" style="left:364px;top:123px;width:54px;height:21px;background:linear-gradient(#f2f2f2,#e6e6e6);border:1px solid #c6c6c6;border-bottom:none"></div>
<div class="t" style="left:365px;top:128px;font-size:12px;transform:scaleX(1.04);transform-origin:0 0">Handout</div>
<div class="a" style="left:419px;top:123px;width:71px;height:21px;background:linear-gradient(#f2f2f2,#e6e6e6);border:1px solid #c6c6c6;border-bottom:none"></div>
<div class="t" style="left:423px;top:128px;font-size:12px;transform:scaleX(.93);transform-origin:0 0">Slide Sorter</div>
<div class="a" style="left:224px;top:146px;width:647px;height:558px;background:#aaaaaa"></div>
<div class="a" style="left:236px;top:193px;width:630px;height:472px;background:rgba(0,0,0,.28);filter:blur(3px)"></div>
<div class="a" style="left:234px;top:190px;width:627px;height:470px;background-color:#654d34;background-image:radial-gradient(circle at 50% 100%,transparent 0 6px,rgba(45,32,18,.3) 6px 7.2px,transparent 7.2px),radial-gradient(circle at 50% 50%,#725a3e 0 2px,transparent 2.5px);background-size:15px 12px,15px 12px;background-position:0 0,7px 6px"></div>
<div class="a" style="left:247px;top:203px;width:601px;height:442px;background:radial-gradient(circle at 50% 50%,#e2cf82 0 1.6px,transparent 1.9px);background-size:4px 4px"></div>
<div class="a" style="left:248px;top:204px;width:599px;height:440px;background:#dbc575"></div>
<div class="a" style="left:252px;top:208px;width:591px;height:432px;background:#efe2a0"></div>
<div class="a" style="left:254px;top:210px;width:587px;height:428px;background:#f2f2f0;box-shadow:inset 0 0 40px 10px #efe09e"></div>
<div class="a" style="left:320px;top:218px;width:456px;height:1.5px;background:#d6cfae"></div>
<div class="a" style="left:263px;top:275px;width:1.5px;height:355px;background:#d6cfae"></div>
<div class="a" style="left:831.5px;top:275px;width:1.5px;height:355px;background:#d6cfae"></div>
<div class="a" style="left:263px;top:628.5px;width:570px;height:1.5px;background:#d6cfae"></div>
<div class="a" style="left:263px;top:312px;width:570px;height:1.5px;background:#d6cfae"></div>
<div class="a" style="left:263px;top:314.5px;width:570px;height:1.5px;background:#dfd9bd"></div>
<svg class="a" style="left:255px;top:210px" width="100" height="100" viewBox="0 0 100 100"><g fill="none" stroke="#c9c5b3" stroke-width="1.1"><path d="M9 9 C5 14 12 20 20 14 C26 9 18 4 9 9"/><path d="M9 9 C20 5 33 10 37 28 C40 45 36 55 31 52"/><path d="M12 15 C4 20 5 40 15 45 C22 48 28 44 30 40"/><path d="M8 27.5 C20 24 45 30 54 26"/><path d="M12 34 C25 32 40 36 50 33"/><path d="M17 40 C28 38 38 42 45 40"/><path d="M32 12 V55"/><path d="M37.6 20 V50"/><path d="M40 36 C48 40 46 48 40 45"/><ellipse cx="58.7" cy="23.6" rx="6" ry="12.8" transform="rotate(10 58.7 23.6)"/><path d="M62 14 C70 11 80 13 88 18"/><path d="M65 9 H100"/><ellipse cx="21.7" cy="60" rx="13" ry="7.5" transform="rotate(-12 21.7 60)"/><path d="M18 58 C17 75 21 87 30 96"/><path d="M8.3 64 V100"/></g></svg>
<svg class="a" style="left:740px;top:210px;transform:scaleX(-1)" width="100" height="100" viewBox="0 0 100 100"><g fill="none" stroke="#c9c5b3" stroke-width="1.1"><path d="M9 9 C5 14 12 20 20 14 C26 9 18 4 9 9"/><path d="M9 9 C20 5 33 10 37 28 C40 45 36 55 31 52"/><path d="M12 15 C4 20 5 40 15 45 C22 48 28 44 30 40"/><path d="M8 27.5 C20 24 45 30 54 26"/><path d="M12 34 C25 32 40 36 50 33"/><path d="M17 40 C28 38 38 42 45 40"/><path d="M32 12 V55"/><path d="M37.6 20 V50"/><path d="M40 36 C48 40 46 48 40 45"/><ellipse cx="58.7" cy="23.6" rx="6" ry="12.8" transform="rotate(10 58.7 23.6)"/><path d="M62 14 C70 11 80 13 88 18"/><path d="M65 9 H100"/><ellipse cx="21.7" cy="60" rx="13" ry="7.5" transform="rotate(-12 21.7 60)"/><path d="M18 58 C17 75 21 87 30 96"/><path d="M8.3 64 V100"/></g></svg>
<div class="t" style="left:355px;top:246.4px;font-size:40px;color:#9a4f37;transform:scaleX(1.105);transform-origin:0 0">A model of Memory</div>
<div class="t" style="left:290.0px;top:434.8px;font-family:'Liberation Serif',serif;font-style:italic;font-size:15px;color:#554836">Sensory Input</div>
<div class="t" style="left:448.5px;top:445.1px;font-family:'Liberation Serif',serif;font-style:italic;font-size:15px;color:#554836">Attention</div>
<div class="t" style="left:538.0px;top:388.0px;font-family:'Liberation Serif',serif;font-style:italic;font-size:15px;color:#554836">Rehearsal</div>
<div class="t" style="left:623.0px;top:434.3px;font-family:'Liberation Serif',serif;font-style:italic;font-size:15px;color:#554836">Storage</div>
<div class="t" style="left:636.0px;top:491.2px;font-family:'Liberation Serif',serif;font-style:italic;font-size:15px;color:#554836">Retrieval</div>
<div class="a" style="left:382px;top:439px;width:61px;height:61px;border-radius:8px;background:#4b0a8a"></div>
<div class="a" style="left:529px;top:433px;width:78px;height:73px;background:#f7931e"></div>
<div class="a" style="left:696px;top:423px;width:98px;height:94px;border-radius:11px;background:#0a7a12"></div>
<div class="t" style="left:353px;width:120px;text-align:center;top:458.0px;font-size:10.5px;font-weight:bold;color:#fff;letter-spacing:1.1px;text-shadow:1px 1px 0 rgba(0,0,0,.45)">Sensory</div><div class="t" style="left:353px;width:120px;text-align:center;top:471.1px;font-size:10.5px;font-weight:bold;color:#fff;letter-spacing:1.1px;text-shadow:1px 1px 0 rgba(0,0,0,.45)">memory</div>
<div class="t" style="left:508px;width:120px;text-align:center;top:458.7px;font-size:10.5px;font-weight:bold;color:#fff;letter-spacing:1.1px;text-shadow:1px 1px 0 rgba(0,0,0,.45)">Short-term</div><div class="t" style="left:508px;width:120px;text-align:center;top:471.1px;font-size:10.5px;font-weight:bold;color:#fff;letter-spacing:1.1px;text-shadow:1px 1px 0 rgba(0,0,0,.45)">memory</div>
<div class="t" style="left:685px;width:120px;text-align:center;top:458.6px;font-size:10.5px;font-weight:bold;color:#fff;letter-spacing:1.1px;text-shadow:1px 1px 0 rgba(0,0,0,.45)">Long-term</div><div class="t" style="left:685px;width:120px;text-align:center;top:471.1px;font-size:10.5px;font-weight:bold;color:#fff;letter-spacing:1.1px;text-shadow:1px 1px 0 rgba(0,0,0,.45)">memory</div>
<svg class="a" style="left:0;top:0" width="1183" height="783"><path d="M371.0 469.5 L357.9 476.4 L361.6 469.4 L358.1 462.4 Z" fill="#000"/><line x1="290.0" y1="468.7" x2="362.6" y2="469.4" stroke="#000" stroke-width="5.5"/><path d="M518.6 469.8 L505.6 476.7 L509.2 469.7 L505.6 462.7 Z" fill="#000"/><line x1="445.0" y1="469.3" x2="510.2" y2="469.7" stroke="#000" stroke-width="5.5"/><path d="M691.3 452.6 L678.3 459.6 L681.9 452.6 L678.3 445.6 Z" fill="#000"/><line x1="611.5" y1="452.5" x2="682.9" y2="452.6" stroke="#000" stroke-width="5"/><path d="M619.4 488.6 L632.4 481.6 L628.8 488.6 L632.4 495.6 Z" fill="#000"/><line x1="693.0" y1="488.6" x2="627.8" y2="488.6" stroke="#000" stroke-width="5"/><path d="M551.5 432.0 L550.4 419.3 L554.9 424.9 L562.1 424.9 Z" fill="#000"/><line x1="563.5" y1="407.0" x2="554.5" y2="425.8" stroke="#000" stroke-width="5"/><path d="M581.0 408.5 L591.6 415.7 L584.4 415.7 L579.8 421.2 Z" fill="#000"/><line x1="592.0" y1="432.0" x2="583.9" y2="414.8" stroke="#000" stroke-width="5"/></svg>
<svg class="a" style="left:0;top:0" width="1183" height="783"><rect x="564.0" y="429.0" width="8" height="8" rx="1" fill="#3fd6de" stroke="#1d3c40" stroke-width="1"/><rect x="603.0" y="429.0" width="8" height="8" rx="1" fill="#3fd6de" stroke="#1d3c40" stroke-width="1"/><rect x="524.5" y="465.5" width="8" height="8" rx="1" fill="#3fd6de" stroke="#1d3c40" stroke-width="1"/><rect x="603.0" y="465.5" width="8" height="8" rx="1" fill="#3fd6de" stroke="#1d3c40" stroke-width="1"/><rect x="524.5" y="502.0" width="8" height="8" rx="1" fill="#3fd6de" stroke="#1d3c40" stroke-width="1"/><rect x="564.0" y="502.0" width="8" height="8" rx="1" fill="#3fd6de" stroke="#1d3c40" stroke-width="1"/><rect x="603.0" y="502.0" width="8" height="8" rx="1" fill="#3fd6de" stroke="#1d3c40" stroke-width="1"/><circle cx="528.5" cy="433" r="4.3" fill="#c6e23a" stroke="#2c3a10" stroke-width="1"/></svg>
<div class="a" style="left:871px;top:146px;width:1px;height:575px;background:#fff"></div>
<div class="a" style="left:872px;top:270px;width:15px;height:352px;background:#cdcdcd"></div>
<svg class="a" style="left:875px;top:152px" width="9" height="6"><path d="M1 5 L4.5 1.5 L8 5" stroke="#555" stroke-width="1.8" fill="none"/></svg>
<svg class="a" style="left:875px;top:692px" width="9" height="6"><path d="M1 1 L4.5 4.5 L8 1" stroke="#555" stroke-width="1.8" fill="none"/></svg>
<div class="a" style="left:441px;top:705px;width:211px;height:15px;background:#cdcdcd"></div>
<svg class="a" style="left:229px;top:708px" width="6" height="9"><path d="M5 1 L1.5 4.5 L5 8" stroke="#555" stroke-width="1.8" fill="none"/></svg>
<svg class="a" style="left:860px;top:708px" width="6" height="9"><path d="M1 1 L4.5 4.5 L1 8" stroke="#555" stroke-width="1.8" fill="none"/></svg>
<div class="a" style="left:888px;top:117px;width:1px;height:604px;background:#d8d8d8"></div>
<!-- splitter 2 -->
<svg class="a" style="left:890px;top:400px" width="5" height="38"><path d="M1 1 L4 3.5 L1 6Z M1 32 L4 34.5 L1 37Z" fill="#444"/><path d="M1 10h2M1 14h2M1 18h2M1 22h2M1 26h2" stroke="#555"/></svg>
<!-- properties -->
<div class="a" style="left:895px;top:117px;width:280px;height:604px;background:#f0f0f0;border-left:1px solid #9a9a9a;border-top:1px solid #9a9a9a"></div>
<div class="a" style="left:896px;top:118px;width:1px;height:603px;background:#fff"></div>
<div class="a" style="left:899px;top:121px;width:237px;height:598px;background:#f0f0f0;border:1px solid #e2e2e2"></div>
<div class="t" style="left:909.5px;top:128.4px;font-size:12.5px;font-weight:bold;color:#000;transform:scaleX(0.930);transform-origin:0 0;">Properties</div>
<svg class="a" style="left:1120px;top:127px" width="10" height="10"><path d="M1 1 L9 9 M9 1 L1 9" stroke="#555" stroke-width="1.7"/></svg>
<div class="a" style="left:900px;top:147px;width:235px;height:27px;background:linear-gradient(#e0e0e0,#efefef)"></div><div class="a" style="left:905px;top:157px;width:9px;height:9px;border:1px solid #4a4a4a;background:#fff"></div><div class="a" style="left:907px;top:161px;width:5px;height:1px;background:#000"></div><div class="a" style="left:909px;top:159px;width:1px;height:5px;background:#000"></div><div class="t" style="left:919.5px;top:155.3px;font-size:12px;font-weight:bold;color:#000;transform:scaleX(1.017);transform-origin:0 0;">Text</div>
<div class="a" style="left:1118px;top:153px;width:11px;height:10px;border:1px solid #3e78c0;border-top-width:2px;background:#fff"></div><div class="a" style="left:1121px;top:159px;width:1px;height:1px;background:#333;box-shadow:2px 0 #333,4px 0 #333"></div>
<div class="a" style="left:900px;top:174px;width:235px;height:27px;background:linear-gradient(#e0e0e0,#efefef)"></div><div class="a" style="left:905px;top:184px;width:9px;height:9px;border:1px solid #4a4a4a;background:#fff"></div><div class="a" style="left:907px;top:188px;width:5px;height:1px;background:#000"></div><div class="a" style="left:909px;top:186px;width:1px;height:5px;background:#000"></div><div class="t" style="left:919.5px;top:182.3px;font-size:12px;font-weight:bold;color:#000;transform:scaleX(0.918);transform-origin:0 0;">Paragraph</div>
<div class="a" style="left:1118px;top:180px;width:11px;height:10px;border:1px solid #3e78c0;border-top-width:2px;background:#fff"></div><div class="a" style="left:1121px;top:186px;width:1px;height:1px;background:#333;box-shadow:2px 0 #333,4px 0 #333"></div>
<div class="a" style="left:900px;top:201px;width:235px;height:27px;background:linear-gradient(#e0e0e0,#efefef)"></div><div class="a" style="left:905px;top:211px;width:9px;height:9px;border:1px solid #4a4a4a;background:#fff"></div><div class="a" style="left:907px;top:215px;width:5px;height:1px;background:#000"></div><div class="t" style="left:919.5px;top:209.8px;font-size:12px;font-weight:bold;color:#000;transform:scaleX(0.918);transform-origin:0 0;">Area</div>
<div class="a" style="left:1118px;top:207px;width:11px;height:10px;border:1px solid #3e78c0;border-top-width:2px;background:#fff"></div><div class="a" style="left:1121px;top:213px;width:1px;height:1px;background:#333;box-shadow:2px 0 #333,4px 0 #333"></div>
<div class="t" style="left:906.0px;top:231.8px;font-size:12px;;color:#000;transform:scaleX(0.931);transform-origin:0 0;"><span class="u">F</span>ill:</div>
<div class="a" style="left:906px;top:251px;width:108px;height:23px;background:#fff;border:1px solid #8f8f8f;border-right-color:#a8a8a8;border-bottom-color:#c8c8c8"></div><div class="a" style="left:996px;top:252px;width:17px;height:21px;background:linear-gradient(#e9e9e9,#dcdcdc);border-left:1px solid #b0b0b0"></div><svg class="a" style="left:1001px;top:260px" width="9" height="6"><path d="M1 1 L4.5 4.5 L8 1" stroke="#555" stroke-width="2" fill="none"/></svg>
<div class="t" style="left:910.0px;top:256.8px;font-size:12px;;color:#000;transform:scaleX(1.011);transform-origin:0 0;">Color</div>
<div class="a" style="left:1021px;top:249px;width:99px;height:27px;background:#f7f7f7;border:1px solid #e4e4e4"></div>
<svg class="a" style="left:1028px;top:255px" width="16" height="14"><path d="M2 7 L6 2 L11 7 L7 12Z" fill="#9ec4ee" stroke="#2c5c9c" stroke-width="1.2"/><path d="M8 3 Q13 3 13 10" stroke="#333" stroke-width="1.5" fill="none"/></svg>
<div class="a" style="left:1045px;top:257px;width:56px;height:11px;background:#f7931e;border:1px solid #3c5a8a"></div>
<div class="dd" style="left:1108px;top:261px"></div>
<div class="t" style="left:906.0px;top:284.1px;font-size:12px;;color:#000;transform:scaleX(0.957);transform-origin:0 0;"><span class="u">T</span>ransparency:</div>
<div class="a" style="left:906px;top:303px;width:108px;height:23px;background:#fff;border:1px solid #8f8f8f;border-right-color:#a8a8a8;border-bottom-color:#c8c8c8"></div><div class="a" style="left:996px;top:304px;width:17px;height:21px;background:linear-gradient(#e9e9e9,#dcdcdc);border-left:1px solid #b0b0b0"></div><svg class="a" style="left:1001px;top:312px" width="9" height="6"><path d="M1 1 L4.5 4.5 L8 1" stroke="#555" stroke-width="2" fill="none"/></svg>
<div class="t" style="left:910.0px;top:308.8px;font-size:12px;;color:#000;transform:scaleX(0.906);transform-origin:0 0;">None</div>
<div class="a" style="left:1020px;top:303px;width:108px;height:23px;background:#fff;border:1px solid #8f8f8f;border-right-color:#a8a8a8;border-bottom-color:#c8c8c8"></div><div class="a" style="left:1110px;top:305px;width:16px;height:19px;background:#f4f4f4;border:1px solid #b8b8b8"></div><div class="a" style="left:1110px;top:314px;width:16px;height:1px;background:#b8b8b8"></div><div class="a" style="left:1113px;top:308px;border-left:3.5px solid transparent;border-right:3.5px solid transparent;border-bottom:4px solid #222"></div><div class="a" style="left:1113px;top:317px;border-left:3.5px solid transparent;border-right:3.5px solid transparent;border-top:4px solid #222"></div>
<div class="t" style="left:1024.0px;top:308.8px;font-size:12px;;color:#000;transform:scaleX(0.865);transform-origin:0 0;">0%</div>
<div class="a" style="left:900px;top:335px;width:235px;height:27px;background:linear-gradient(#e0e0e0,#efefef)"></div><div class="a" style="left:905px;top:345px;width:9px;height:9px;border:1px solid #4a4a4a;background:#fff"></div><div class="a" style="left:907px;top:349px;width:5px;height:1px;background:#000"></div><div class="t" style="left:919.5px;top:343.8px;font-size:12px;font-weight:bold;color:#000;transform:scaleX(0.855);transform-origin:0 0;">Line</div>
<div class="a" style="left:1118px;top:341px;width:11px;height:10px;border:1px solid #3e78c0;border-top-width:2px;background:#fff"></div><div class="a" style="left:1121px;top:347px;width:1px;height:1px;background:#333;box-shadow:2px 0 #333,4px 0 #333"></div>
<div class="t" style="left:906.0px;top:365.4px;font-size:12px;;color:#000;transform:scaleX(1.017);transform-origin:0 0;"><span class="u">W</span>idth:</div>
<div class="t" style="left:1021.0px;top:365.4px;font-size:12px;;color:#000;transform:scaleX(0.956);transform-origin:0 0;"><span class="u">C</span>olor:</div>
<div class="a" style="left:906px;top:382px;width:100px;height:25px;background:#f7f7f7;border:1px solid #e4e4e4"></div>
<div class="a" style="left:911px;top:393px;width:76px;height:1px;background:#000"></div>
<div class="dd" style="left:994px;top:392px"></div>
<div class="a" style="left:1021px;top:382px;width:99px;height:25px;background:#f7f7f7;border:1px solid #e4e4e4"></div>
<svg class="a" style="left:1025px;top:386px" width="18" height="16"><path d="M2 12 L11 3 L13 5 L4 14 L1.5 14.5Z" fill="#f2c23a" stroke="#8a6212" stroke-width=".9"/><rect x="8" y="13" width="8" height="2" fill="#3c5f8e"/></svg>
<div class="a" style="left:1045px;top:388px;width:56px;height:11px;background:#808080;border:1px solid #3c5a8a"></div>
<div class="dd" style="left:1108px;top:392px"></div>
<div class="t" style="left:906.0px;top:420.2px;font-size:12px;;color:#000;transform:scaleX(0.899);transform-origin:0 0;"><span class="u">S</span>tyle:</div>
<div class="t" style="left:1021.0px;top:420.2px;font-size:12px;;color:#000;transform:scaleX(0.944);transform-origin:0 0;"><span class="u">T</span>ransparency:</div>
<div class="a" style="left:906px;top:437px;width:108px;height:23px;background:#fff;border:1px solid #8f8f8f;border-right-color:#a8a8a8;border-bottom-color:#c8c8c8"></div><div class="a" style="left:996px;top:438px;width:17px;height:21px;background:linear-gradient(#e9e9e9,#dcdcdc);border-left:1px solid #b0b0b0"></div><svg class="a" style="left:1001px;top:446px" width="9" height="6"><path d="M1 1 L4.5 4.5 L8 1" stroke="#555" stroke-width="2" fill="none"/></svg>
<div class="t" style="left:909.0px;top:442.8px;font-size:12px;;color:#000;transform:scaleX(0.991);transform-origin:0 0;">- none -</div>
<div class="a" style="left:1020px;top:437px;width:108px;height:23px;background:#fff;border:1px solid #8f8f8f;border-right-color:#a8a8a8;border-bottom-color:#c8c8c8"></div><div class="a" style="left:1110px;top:439px;width:16px;height:19px;background:#f4f4f4;border:1px solid #b8b8b8"></div><div class="a" style="left:1110px;top:448px;width:16px;height:1px;background:#b8b8b8"></div><div class="a" style="left:1113px;top:442px;border-left:3.5px solid transparent;border-right:3.5px solid transparent;border-bottom:4px solid #222"></div><div class="a" style="left:1113px;top:451px;border-left:3.5px solid transparent;border-right:3.5px solid transparent;border-top:4px solid #222"></div>
<div class="t" style="left:1024.0px;top:442.8px;font-size:12px;;color:#000;transform:scaleX(0.865);transform-origin:0 0;">0%</div>
<div class="t" style="left:906.0px;top:475.1px;font-size:12px;;color:#000;transform:scaleX(0.894);transform-origin:0 0;"><span class="u">A</span>rrow:</div>
<div class="a" style="left:906px;top:491px;width:108px;height:23px;background:#fff;border:1px solid #8f8f8f;border-right-color:#a8a8a8;border-bottom-color:#c8c8c8"></div><div class="a" style="left:996px;top:492px;width:17px;height:21px;background:linear-gradient(#e9e9e9,#dcdcdc);border-left:1px solid #b0b0b0"></div><svg class="a" style="left:1001px;top:500px" width="9" height="6"><path d="M1 1 L4.5 4.5 L8 1" stroke="#555" stroke-width="2" fill="none"/></svg>
<div class="t" style="left:909.0px;top:496.8px;font-size:12px;;color:#000;transform:scaleX(0.991);transform-origin:0 0;">- none -</div>
<div class="a" style="left:1020px;top:491px;width:108px;height:23px;background:#fff;border:1px solid #8f8f8f;border-right-color:#a8a8a8;border-bottom-color:#c8c8c8"></div><div class="a" style="left:1110px;top:492px;width:17px;height:21px;background:linear-gradient(#e9e9e9,#dcdcdc);border-left:1px solid #b0b0b0"></div><svg class="a" style="left:1115px;top:500px" width="9" height="6"><path d="M1 1 L4.5 4.5 L8 1" stroke="#555" stroke-width="2" fill="none"/></svg>
<div class="t" style="left:1023.0px;top:496.8px;font-size:12px;;color:#000;transform:scaleX(0.991);transform-origin:0 0;">- none -</div>
<div class="t" style="left:906.0px;top:529.3px;font-size:12px;;color:#000;transform:scaleX(0.958);transform-origin:0 0;"><span class="u">C</span>orner style</div>
<div class="t" style="left:1021.0px;top:529.3px;font-size:12px;;color:#000;transform:scaleX(0.939);transform-origin:0 0;">Ca<span class="u">p</span> style</div>
<div class="a" style="left:906px;top:546px;width:108px;height:23px;background:#fff;border:1px solid #8f8f8f;border-right-color:#a8a8a8;border-bottom-color:#c8c8c8"></div><div class="a" style="left:996px;top:547px;width:17px;height:21px;background:linear-gradient(#e9e9e9,#dcdcdc);border-left:1px solid #b0b0b0"></div><svg class="a" style="left:1001px;top:555px" width="9" height="6"><path d="M1 1 L4.5 4.5 L8 1" stroke="#555" stroke-width="2" fill="none"/></svg>
<div class="t" style="left:909.0px;top:551.8px;font-size:12px;;color:#000;transform:scaleX(0.965);transform-origin:0 0;">Rounded</div>
<div class="a" style="left:1020px;top:546px;width:108px;height:23px;background:#fff;border:1px solid #8f8f8f;border-right-color:#a8a8a8;border-bottom-color:#c8c8c8"></div><div class="a" style="left:1110px;top:547px;width:17px;height:21px;background:linear-gradient(#e9e9e9,#dcdcdc);border-left:1px solid #b0b0b0"></div><svg class="a" style="left:1115px;top:555px" width="9" height="6"><path d="M1 1 L4.5 4.5 L8 1" stroke="#555" stroke-width="2" fill="none"/></svg>
<div class="t" style="left:1023.0px;top:551.8px;font-size:12px;;color:#000;transform:scaleX(0.899);transform-origin:0 0;">Flat</div>
<div class="a" style="left:900px;top:578px;width:235px;height:27px;background:linear-gradient(#e0e0e0,#efefef)"></div><div class="a" style="left:905px;top:588px;width:9px;height:9px;border:1px solid #4a4a4a;background:#fff"></div><div class="a" style="left:907px;top:592px;width:5px;height:1px;background:#000"></div><div class="a" style="left:909px;top:590px;width:1px;height:5px;background:#000"></div><div class="t" style="left:919.5px;top:586.8px;font-size:12px;font-weight:bold;color:#000;transform:scaleX(0.921);transform-origin:0 0;">Position and Size</div>
<div class="a" style="left:1118px;top:585px;width:11px;height:10px;border:1px solid #3e78c0;border-top-width:2px;background:#fff"></div><div class="a" style="left:1121px;top:591px;width:1px;height:1px;background:#333;box-shadow:2px 0 #333,4px 0 #333"></div>
<div class="a" style="left:900px;top:605px;width:235px;height:1px;background:#e2e2e2"></div>
<div class="a" style="left:1173px;top:117px;width:1px;height:604px;background:#a8a8a8"></div><div class="a" style="left:1174px;top:117px;width:1px;height:604px;background:#fff"></div>
<svg class="a" style="left:1150px;top:131px" width="11" height="11"><path d="M0 1.5h8M0 4h8M0 6.5h8" stroke="#222" stroke-width="1.2"/><path d="M4 7 L10 7 L7 10.5Z" fill="#111"/></svg>
<div class="a" style="left:1144px;top:155px;width:24px;height:1px;background:#d8d8d8"></div>
<div class="a" style="left:1139px;top:159px;width:32px;height:32px;border:1px solid #a8a8a8;border-radius:4px;background:linear-gradient(#f6f6f6,#ececec)"></div>
<div class="a" style="left:1145px;top:183px;width:20px;height:4px;border-radius:50%;background:rgba(0,0,0,.12)"></div>
<svg class="a" style="left:1144px;top:163px" width="21" height="21" viewBox="0 0 21 21"><path d="M10.5 1 L19.5 5.5 V15.5 L10.5 20 L1.5 15.5 V5.5Z" fill="#8ed04a"/><path d="M10.5 1 L19.5 5.5 L10.5 10 L1.5 5.5Z" fill="#5ab0f0"/><path d="M1.5 5.5 L10.5 10 V20 L1.5 15.5Z" fill="#3a8ee0"/><path d="M6 7.75 L10.5 10 V15 L6 12.75Z M1.5 10.5 L6 12.75 V17.75 L1.5 15.5Z" fill="#8ed04a"/><path d="M10.5 10 L15 7.75 L19.5 5.5 M6 3.25 L15 7.75 M15 3.25 L6 7.75 M1.5 10.5 L10.5 15 L19.5 10.5 M6 7.75 V17.75 M15 7.75 V17.75 M10.5 10 V20" stroke="#fff" stroke-width=".9" fill="none"/></svg>
<svg class="a" style="left:1144px;top:198px" width="21" height="22" viewBox="0 0 21 22"><rect x="1.5" y="1.5" width="18" height="15" fill="#fff" stroke="#6b7d90" stroke-width="1.2"/><rect x="3" y="3" width="15" height="2" fill="#3f7fd0"/><path d="M5 9 V20 M10.5 9 V20 M16 9 V20" stroke-width="3" stroke="#3f7fd0"/><path d="M10.5 9 V20" stroke-width="3" stroke="#f2a030"/><path d="M16 9 V20" stroke-width="3" stroke="#4cc04a"/><ellipse cx="10.5" cy="21" rx="9" ry="1.2" fill="rgba(0,0,0,.12)"/></svg>
<svg class="a" style="left:1143px;top:232px" width="24" height="24" viewBox="0 0 24 24"><path d="M10 1 L13 8 L20 8.5 L14.5 13 L16.5 20 L10 16 L3.5 20 L5.5 13 L0.5 8.5 L7 8Z" fill="#f6c93a" stroke="#d49a1a"/><path d="M17 5h6M19 8h4M18 11h5M17 14h5" stroke="#f0c060" stroke-width="1"/><ellipse cx="11" cy="23" rx="9" ry="1.2" fill="rgba(0,0,0,.12)"/></svg>
<svg class="a" style="left:1143px;top:267px" width="24" height="23" viewBox="0 0 24 23"><rect x="1.5" y="4.5" width="11" height="14" fill="#fff" stroke="#555"/><path d="M3 7h6M3 9.5h6M3 12h6" stroke="#666"/><rect x="10.5" y="1.5" width="12" height="16" fill="#fff" stroke="#7a8a9a"/><path d="M12 4h8" stroke="#3f7fd0"/><path d="M13 16 L17 11 L21 16Z" fill="#4caa3a"/><path d="M4 11.5 H12 M9.5 8.5 L13 11.5 L9.5 14.5" stroke="#2a6fc8" stroke-width="2.2" fill="none"/><ellipse cx="12" cy="22" rx="9" ry="1.2" fill="rgba(0,0,0,.12)"/></svg>
<svg class="a" style="left:1143px;top:302px" width="24" height="23" viewBox="0 0 24 23"><path d="M3 19 L8 6 L16 12Z" fill="#2a7fe0"/><circle cx="10" cy="9" r="5" fill="#1a3a5a"/><path d="M4 4 Q8 0 12 4" stroke="#d87a2a" stroke-width="3" fill="none"/><path d="M14 14 Q19 12 18 19 Q14 19 14 14Z" fill="#6ac040"/><path d="M20 2 L21 4.5 L23.5 4.7 L21.6 6.3 L22.2 8.7 L20 7.4 L17.8 8.7 L18.4 6.3 L16.5 4.7 L19 4.5Z" fill="#f4d040"/><circle cx="3" cy="12" r="2.2" fill="#e060b0"/><circle cx="13" cy="3" r="2" fill="#b080e0"/><circle cx="20" cy="13" r="2" fill="#e05080"/><ellipse cx="12" cy="22" rx="9" ry="1.2" fill="rgba(0,0,0,.12)"/></svg>
<svg class="a" style="left:1143px;top:337px" width="24" height="23" viewBox="0 0 24 23"><path d="M1 7 L17 2 L21 14 L5 19Z" fill="#fff" stroke="#8a9aaa"/><path d="M4 8 L16 4 L19 13 L7 17Z" fill="#9fd0f0"/><path d="M7 17 L12 10 L19 13Z" fill="#5ab040"/><path d="M6 12 L10 7 L13 10" stroke="#2a6fc8" stroke-width="1.6" fill="none"/><ellipse cx="12" cy="22" rx="9" ry="1.2" fill="rgba(0,0,0,.12)"/></svg>
<svg class="a" style="left:1143px;top:372px" width="24" height="24" viewBox="0 0 24 24"><circle cx="11.5" cy="11.5" r="10" fill="#fff" stroke="#f0a020" stroke-width="2.6"/><path d="M15.5 6 L11 11 L13 13Z" fill="#e03030"/><path d="M7 17 L11 11 L13 13Z" fill="#3f7fd0"/><text x="9.2" y="7" font-size="5" font-weight="bold" fill="#222" font-family="Liberation Sans">N</text><ellipse cx="12" cy="23" rx="9" ry="1" fill="rgba(0,0,0,.12)"/></svg>

<div class="a" style="left:895px;top:720px;width:280px;height:1px;background:#c8c8c8"></div>


<!-- bottom draw toolbar -->
<div class="a" style="left:8px;top:721px;width:1167px;height:31px;background:#f5f6f7;border-top:1px solid #e0e0e0"></div>
<div class="a" style="left:796px;top:722px;width:1px;height:30px;background:#d6d6d6"></div>
<div class="a" style="left:8px;top:751px;width:1167px;height:1px;background:#cfcfcf"></div>
<div class="grip" style="left:12px;top:726px;height:19px"></div>
<div class="hbtn" style="left:20px;top:724px;width:25px;height:27px"></div>
<svg class="a" style="left:26px;top:729px" width="12" height="16"><path d="M2 1 L2 13 L5 10 L7.5 15 L9.5 14 L7 9 L11 9Z" fill="#fff" stroke="#111" stroke-width="1.1"/></svg>
<div class="sep" style="left:48px;top:729px;height:16px"></div>
<svg class="a" style="left:57px;top:729px" width="16" height="16"><path d="M1 15 L15 1" stroke="#3d7fd0" stroke-width="1.6"/></svg>
<svg class="a" style="left:82px;top:730px" width="16" height="14"><path d="M1 7 H13 M8.5 2.5 L13.5 7 L8.5 11.5" stroke="#3d7fd0" stroke-width="2" fill="none"/></svg>
<svg class="a" style="left:106px;top:731px" width="18" height="12"><rect x="1" y="1.5" width="15" height="9" fill="#5a9ee8" stroke="#2458a0" stroke-width="1.4"/></svg>
<svg class="a" style="left:131px;top:730px" width="18" height="13"><ellipse cx="8.5" cy="6.5" rx="7.5" ry="5" fill="#5a9ee8" stroke="#2458a0" stroke-width="1.4"/></svg>
<svg class="a" style="left:159px;top:729px" width="14" height="16"><path d="M1 1.5 H13 V5 H12 L11 3.5 H8.5 V13.5 L10 14.5 V15 H4 V14.5 L5.5 13.5 V3.5 H3 L2 5 H1Z" fill="#2f4d70" stroke="#2f4d70" stroke-width=".5"/></svg>
<div class="sep" style="left:181px;top:729px;height:16px"></div>
<svg class="a" style="left:188px;top:728px" width="18" height="17"><path d="M1 13 Q6 9 10 13 T17 12" stroke="#2a5faa" stroke-width="1.6" fill="none"/><path d="M5 11 L13 2 L16 4.5 L8 13.5 L4.5 14Z" fill="#f2c23a" stroke="#8a6212" stroke-width=".8"/><path d="M13 2 L14.5 0.5 L17 3 L16 4.5Z" fill="#e05050"/></svg>
<div class="dd" style="left:212px;top:737px"></div>
<svg class="a" style="left:226px;top:730px" width="16" height="14"><path d="M3 3 Q6 3 7 7 T13 11" stroke="#3d7fd0" stroke-width="1.6" fill="none"/><circle cx="3" cy="3" r="2.2" fill="#2a5faa"/><circle cx="13" cy="11" r="2.2" fill="#2a5faa"/></svg>
<div class="dd" style="left:248px;top:737px"></div>
<svg class="a" style="left:261px;top:729px" width="16" height="16"><path d="M8 1 L15 8 L8 15 L1 8Z" fill="#5aa0ea" stroke="#2458a0" stroke-width="1.2"/></svg>
<div class="dd" style="left:284px;top:737px"></div>
<svg class="a" style="left:296px;top:729px" width="17" height="17"><circle cx="8.5" cy="8.5" r="7.5" fill="#6aaaf0" stroke="#2458a0" stroke-width="1.1"/><circle cx="6" cy="6.5" r="1" fill="#1a3a6a"/><circle cx="11" cy="6.5" r="1" fill="#1a3a6a"/><path d="M4.5 10 Q8.5 13.5 12.5 10" stroke="#1a3a6a" stroke-width="1.1" fill="none"/></svg>
<div class="dd" style="left:320px;top:737px"></div>
<svg class="a" style="left:332px;top:731px" width="17" height="12"><path d="M1 6 L5 1.5 V4 H12 V1.5 L16 6 L12 10.5 V8 H5 V10.5Z" fill="#a9cdf5" stroke="#2a6ac0" stroke-width="1.2"/></svg>
<div class="dd" style="left:356px;top:737px"></div>
<svg class="a" style="left:370px;top:729px" width="15" height="16"><rect x="1" y="1" width="13" height="14" fill="#5a9ee8" stroke="#2458a0" stroke-width="1.2"/><rect x="3" y="4" width="9" height="9" fill="#a9cdf5"/><path d="M3 3h9" stroke="#fff"/></svg>
<div class="dd" style="left:392px;top:737px"></div>
<svg class="a" style="left:404px;top:728px" width="18" height="18"><path d="M2 1.5 H16 Q17 1.5 17 3 V10 Q17 11.5 16 11.5 H8 L3 16 L4.5 11.5 H2 Q1 11.5 1 10 V3 Q1 1.5 2 1.5Z" fill="#8fc0f2" stroke="#2458a0" stroke-width="1.2"/></svg>
<div class="dd" style="left:428px;top:737px"></div>
<svg class="a" style="left:440px;top:729px" width="17" height="16"><path d="M8.5 0.5 L10.8 5.5 L16.3 6 L12.2 9.7 L13.4 15.2 L8.5 12.4 L3.6 15.2 L4.8 9.7 L0.7 6 L6.2 5.5Z" fill="#5aa0ea" stroke="#2458a0" stroke-width="1.1"/></svg>
<div class="dd" style="left:464px;top:737px"></div>
<div class="sep" style="left:477px;top:729px;height:16px"></div>
<svg class="a" style="left:485px;top:728px" width="18" height="17"><path d="M2 15 L4 6 L10 3 L16 2 L12 10 L15 15Z" fill="none" stroke="#2f4d70" stroke-width="1.1"/><g fill="#fff" stroke="#2f4d70"><rect x="0.5" y="13.5" width="3" height="3"/><rect x="2.5" y="4.5" width="3" height="3"/><rect x="8.5" y="1.5" width="3" height="3"/><rect x="14.5" y="0.5" width="3" height="3"/><rect x="10.5" y="8.5" width="3" height="3"/><rect x="13.5" y="13.5" width="3" height="3"/></g></svg>
<svg class="a" style="left:512px;top:728px" width="16" height="17"><path d="M2 15 L6 10" stroke="#2f4d70" stroke-width="1.6"/><path d="M5 10 L11 3 L14 5.5 L8 12.5 L5 13Z" fill="#f2c23a" stroke="#8a6212" stroke-width=".8"/><circle cx="2.5" cy="14.5" r="1.8" fill="#2f4d70"/></svg>
<div class="sep" style="left:535px;top:729px;height:16px"></div>
<svg class="a" style="left:543px;top:728px" width="18" height="17"><path d="M6 3 L9 0.5 L12 3" stroke="#8a6212" fill="none"/><rect x="1.5" y="3.5" width="15" height="12" fill="#e8a030" stroke="#8a5a12"/><rect x="4" y="6" width="10" height="7" fill="#f4f4f4"/><text x="6" y="12.3" font-size="7" font-weight="bold" fill="#2a5faa" font-family="Liberation Sans">A</text></svg>
<svg class="a" style="left:569px;top:728px" width="18" height="17"><rect x="1" y="5" width="9" height="9" fill="#e86a2a" stroke="#8a3a12" stroke-width=".8"/><circle cx="12" cy="6" r="5" fill="#f4c030" stroke="#a87a12" stroke-width=".8"/><path d="M10 16 L13.5 8.5 L17 16Z" fill="#4a8ae0" stroke="#1a4a90" stroke-width=".8"/></svg>
<svg class="a" style="left:594px;top:728px" width="17" height="17"><path d="M6 3 L8.5 0.5 L11 3" stroke="#8a6212" fill="none"/><rect x="1.5" y="3.5" width="14" height="12" fill="#e8a030" stroke="#8a5a12"/><rect x="4" y="6" width="9" height="7" fill="#7ab8e8"/><path d="M4 13 L8 9 L13 13Z" fill="#4a9a3a"/></svg>
<div class="sep" style="left:618px;top:729px;height:16px"></div>
<svg class="a" style="left:627px;top:729px" width="17" height="16"><path d="M13 11 A6 6 0 1 1 12 3" stroke="#4a7ab8" stroke-width="3.2" fill="none"/><path d="M9 4 A3 3 0 1 0 11 8" stroke="#9ec0e8" stroke-width="2" fill="none"/><path d="M10 0 L16 3 L11 7Z" fill="#4a7ab8"/></svg>
<svg class="a" style="left:651px;top:728px" width="17" height="17"><rect x="0.5" y="0.5" width="16" height="16" fill="#fff" stroke="#9aa"/><path d="M1 0.5 V16.5" stroke="#3aa635" stroke-width="2"/><rect x="3" y="6" width="5" height="5" fill="#3f7fd0"/><path d="M9 8.5 H15 M12 5.5 L9 8.5 L12 11.5" stroke="#e05020" stroke-width="1.8" fill="none"/></svg>
<div class="dd" style="left:674px;top:737px"></div>
<svg class="a" style="left:687px;top:728px" width="17" height="17"><rect x="0.5" y="0.5" width="11" height="11" fill="#3a5a80" stroke="#1a3050"/><rect x="4.5" y="4.5" width="12" height="12" fill="#f4c630" stroke="#8a6212"/></svg>
<div class="dd" style="left:710px;top:737px"></div>
<div class="sep" style="left:724px;top:729px;height:16px"></div>
<svg class="a" style="left:731px;top:728px" width="18" height="17"><rect x="1" y="1" width="7" height="7" fill="#3f7fd0"/><path d="M9 9 L13 6 L17 9 L17 15 L13 17 L9 15Z" fill="#5aa0ea" stroke="#2458a0" stroke-width=".9"/><path d="M3 8 Q3 14 9 13" stroke="#e05020" stroke-width="2.2" fill="none"/></svg>
<svg class="a" style="left:757px;top:728px" width="17" height="17"><path d="M2 4 L6 8 M2 8 H6 M2 12 L6 8 M4 2 V6" stroke="#f0a040" stroke-width="1.4"/><path d="M9 1 H15 V7 M15 1 L9 7" stroke="#3f7fd0" stroke-width="1.8" fill="none"/><path d="M8 6 V16 L10.5 13.5 L12.5 17 L14 16 L12 12.5 L15 12.5Z" fill="#fff" stroke="#222" stroke-width=".9"/></svg>
<div class="a" style="left:784px;top:725px;width:10px;height:25px;background:linear-gradient(#f4f4f4,#9c9c9c)"></div>
<div class="dd" style="left:786px;top:742px;border-left-width:3px;border-right-width:3px;border-top-width:3px"></div>


<!-- status bar -->
<div class="t" style="left:18px;top:760px;font-size:12px;transform:scaleX(.965);transform-origin:0 0">Shape 'AutoShape 3' selected</div>
<div class="a" style="left:420px;top:755px;width:1px;height:18px;background:#b8b8b8"></div>
<svg class="a" style="left:428px;top:758px" width="15" height="12"><path d="M3 0 V11 M0 3 H3" stroke="#1a3a6a"/><path d="M4.5 4.5 H14 V10.5 H4.5" stroke="#333" stroke-dasharray="1 1" fill="none"/></svg>
<div class="t m" style="left:448px;top:760px;font-size:12px">6.69 / 5.51</div>
<svg class="a" style="left:535px;top:757px" width="14" height="13"><rect x="4.5" y="0.5" width="9" height="9" fill="none" stroke="#333" stroke-dasharray="1 1"/><path d="M1 6 V12" stroke="#333" stroke-dasharray="1 1"/></svg>
<div class="t m" style="left:555px;top:760px;font-size:12px">1.78 x 1.67</div>
<div class="a" style="left:641px;top:755px;width:1px;height:18px;background:#b8b8b8"></div>
<div class="t" style="left:646px;top:760px;font-size:11px">*</div>
<div class="a" style="left:657px;top:755px;width:1px;height:18px;background:#b8b8b8"></div>
<div class="a" style="left:686px;top:755px;width:1px;height:18px;background:#b8b8b8"></div>
<div class="t m" style="left:689px;top:760px;font-size:12px">Slide 11 / 46</div>
<div class="a" style="left:756px;top:755px;width:1px;height:18px;background:#b8b8b8"></div>
<div class="t m" style="left:762px;top:760px;font-size:12px">Title2</div>
<div class="a" style="left:996px;top:755px;width:1px;height:18px;background:#b8b8b8"></div>
<svg class="a" style="left:1000px;top:759px" width="13" height="13"><circle cx="6.5" cy="6.5" r="5.5" fill="#dde6ef" stroke="#3f5f8a" stroke-width="1.2"/><path d="M3.5 6.5 H9.5" stroke="#222" stroke-width="1.3"/></svg>
<div class="a" style="left:1017px;top:765px;width:97px;height:1px;background:#555"></div>
<div class="a" style="left:1064px;top:761px;width:1px;height:9px;background:#555"></div>
<div class="a" style="left:1033px;top:760px;width:9px;height:10px;border-radius:50%;background:#5a7898;border:1px solid #2a4058"></div>
<svg class="a" style="left:1118px;top:759px" width="13" height="13"><circle cx="6.5" cy="6.5" r="5.5" fill="#dde6ef" stroke="#3f5f8a" stroke-width="1.2"/><path d="M3.5 6.5 H9.5 M6.5 3.5 V9.5" stroke="#222" stroke-width="1.3"/></svg>
<div class="a" style="left:1138px;top:755px;width:1px;height:18px;background:#b8b8b8"></div>
<div class="t m" style="left:1143px;top:760px;font-size:12px">46%</div>

</body></html>
